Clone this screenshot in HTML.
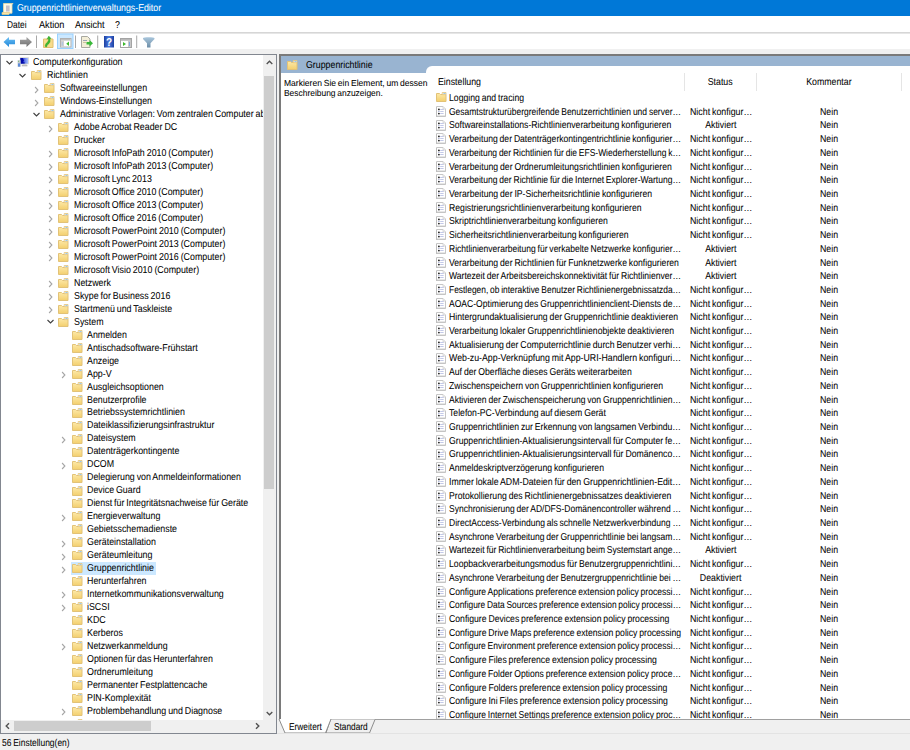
<!DOCTYPE html><html><head><meta charset="utf-8"><style>
html,body{margin:0;padding:0;}
body{width:910px;height:750px;overflow:hidden;position:relative;background:#f0f0f0;font-family:'Liberation Sans',sans-serif;}
.t{position:absolute;white-space:nowrap;line-height:10px;text-rendering:geometricPrecision;-webkit-text-stroke:0.05px currentColor;word-spacing:-0.6px;font-family:'Liberation Sans',sans-serif;}
</style></head><body>
<svg width="0" height="0" style="position:absolute"><defs><linearGradient id="fg" x1="0" y1="0" x2="0" y2="1"><stop offset="0" stop-color="#fde9a8"/><stop offset="1" stop-color="#f3cf6e"/></linearGradient></defs></svg>
<div style="position:absolute;left:0px;top:0px;width:910px;height:16px;background:#0078d7;"></div>
<div class="t" style="left:16.50px;top:4.00px;font-size:10px;color:#fff;transform:scaleX(0.8787);transform-origin:0 0">Gruppenrichtlinienverwaltungs-Editor</div>
<div style="position:absolute;left:1px;top:2px;line-height:0"><svg width="13" height="13" viewBox="0 0 13 13"><path d="M2.5 1.5h9.5l-1 1.2v8.5h-8.5z" fill="#fdf8e4" stroke="#eadca8" stroke-width="0.8"/><rect x="5" y="3.5" width="3.6" height="6" fill="#c4c0c8"/><path d="M1 10.5h7.5l-0.5 2h-7z" fill="#f8e4a8" stroke="#e8cf88" stroke-width="0.7"/></svg></div>
<div style="position:absolute;left:0px;top:16px;width:910px;height:16px;background:#ffffff;"></div>
<div class="t" style="left:7.30px;top:21.00px;font-size:10px;color:#000;transform:scaleX(0.8391);transform-origin:0 0">Datei</div>
<div class="t" style="left:38.50px;top:21.00px;font-size:10px;color:#000;transform:scaleX(0.9138);transform-origin:0 0">Aktion</div>
<div class="t" style="left:74.70px;top:21.00px;font-size:10px;color:#000;transform:scaleX(0.9025);transform-origin:0 0">Ansicht</div>
<div class="t" style="left:115.40px;top:21.00px;font-size:10px;color:#000;transform:scaleX(0.8790);transform-origin:0 0">?</div>
<div style="position:absolute;left:0px;top:32px;width:910px;height:1px;background:#d6d6d6;"></div>
<div style="position:absolute;left:0px;top:33px;width:910px;height:1px;background:#e6e6e6;"></div>
<div style="position:absolute;left:0px;top:34px;width:910px;height:15px;background:#ffffff;"></div>
<svg style="position:absolute;left:0;top:32px" width="160" height="18" viewBox="0 0 160 18">
<defs>
<linearGradient id="gb" x1="0" y1="0" x2="0" y2="1"><stop offset="0" stop-color="#6cc0f5"/><stop offset="1" stop-color="#1f86d8"/></linearGradient>
<linearGradient id="gg" x1="0" y1="0" x2="0" y2="1"><stop offset="0" stop-color="#a8a8a8"/><stop offset="1" stop-color="#6e6e6e"/></linearGradient>
<linearGradient id="gh" x1="0" y1="0" x2="1" y2="0"><stop offset="0" stop-color="#1c3fa0"/><stop offset="0.5" stop-color="#4a7ae0"/><stop offset="1" stop-color="#1c3fa0"/></linearGradient>
<linearGradient id="gf" x1="0" y1="0" x2="0" y2="1"><stop offset="0" stop-color="#a9c6dc"/><stop offset="1" stop-color="#6d8ea8"/></linearGradient>
</defs>
<path d="M3.5 10L9 5v2.8h6v4.4H9V15z" fill="url(#gb)"/>
<path d="M32 10L26.5 5v2.8h-6.5v4.4h6.5V15z" fill="url(#gg)"/>
<rect x="36" y="3.5" width="1" height="12.5" fill="#a8a8a8"/>
<path d="M43.5 7h9.5v8.5h-9.5z" fill="#f8dc8c" stroke="#e0c070" stroke-width="1"/>
<path d="M45 14.5c0-2.5 1.5-3.5 2.5-4.5s1.2-2.2 0.6-3.4l-1.3 0.6 2-3.2 2.3 2.6-1.3 0.3c0.8 1.8 0.3 3.6-1 4.8s-2 1.8-2 3.3z" fill="#3cb832" stroke="#2a9a22" stroke-width="0.3"/>
<rect x="57.5" y="2" width="15.5" height="14.5" fill="#cce8ff" stroke="#99d1ff" stroke-width="1"/>
<rect x="60.5" y="6.5" width="10.5" height="8.5" fill="#fff" stroke="#b0b0b0" stroke-width="1"/>
<rect x="61" y="7" width="9.5" height="1.6" fill="#c0c0c0"/>
<rect x="61" y="8.6" width="3" height="6" fill="#d0d0d0"/><rect x="61.8" y="10" width="1" height="3.5" fill="#a8c4e4"/>
<path d="M69 9.5v4.5l-2.8-2.25z" fill="#3cb82c"/>
<rect x="75" y="3.5" width="1" height="12.5" fill="#a8a8a8"/>
<path d="M81.5 4.5h6l2.5 2.5v8.5h-8.5z" fill="#f3eed8" stroke="#a8a8a0" stroke-width="1"/>
<rect x="83" y="8" width="4" height="0.8" fill="#8890b0"/><rect x="83" y="10" width="3" height="0.8" fill="#c0b890"/>
<path d="M86.5 10h3v-2l3.5 3.3-3.5 3.3v-2h-3z" fill="#38b838"/>
<rect x="97.2" y="3.5" width="1" height="12.5" fill="#a8a8a8"/>
<rect x="104" y="4" width="10" height="11.5" fill="url(#gh)"/>
<text x="109" y="13.8" font-family="Liberation Sans" font-size="10" font-weight="bold" fill="#fff" text-anchor="middle">?</text>
<rect x="120.5" y="6.5" width="11" height="9" fill="#fff" stroke="#a4a4a4" stroke-width="1"/>
<rect x="121" y="7" width="10" height="1.8" fill="#b8b8b8"/>
<rect x="128" y="8.8" width="3" height="6.2" fill="#c8c8c8"/>
<rect x="129" y="10" width="1" height="4" fill="#7fa6d8"/>
<path d="M123 10v4l3-2z" fill="#3cb82c"/>
<rect x="136.2" y="3.5" width="1" height="12.5" fill="#a8a8a8"/>
<path d="M143 6.2c0-1.2 11.5-1.2 11.5 0v0.8l-4 4.2v4.3h-3.5v-4.3l-4-4.2z" fill="url(#gf)"/>
</svg>
<div style="position:absolute;left:0px;top:54px;width:277px;height:680px;background:#ffffff;box-sizing:border-box;border:1px solid #828790;"></div>
<div style="position:absolute;left:279px;top:54px;width:631px;height:666px;background:#ffffff;box-sizing:border-box;border-left:2px solid #7a7a7a;border-top:2px solid #7a7a7a;"></div>
<div style="position:absolute;left:1px;top:55px;width:262px;height:665px;overflow:hidden">
<div style="position:absolute;left:5px;top:5px;line-height:0"><svg width="7" height="5" viewBox="0 0 7 5"><path d="M0.5 1l3 3 3-3" fill="none" stroke="#404040" stroke-width="1.1"/></svg></div>
<div style="position:absolute;left:16px;top:2px;line-height:0"><svg width="13" height="11" viewBox="0 0 13 11"><defs><linearGradient id="scr" x1="0" y1="0" x2="1" y2="0"><stop offset="0" stop-color="#0010c8"/><stop offset="1" stop-color="#a8c4ff"/></linearGradient></defs><rect x="2.8" y="0.3" width="9" height="7" fill="#d4d4cc"/><rect x="3.5" y="1" width="7.6" height="5.6" fill="url(#scr)"/><path d="M3.6 1h2.2l1.2 2.6-1 1.6h1.5l0.2 1.4h-4.1z" fill="#0008a8"/><rect x="5.5" y="7.3" width="4.2" height="0.8" fill="#c8c8c8"/><rect x="4.8" y="8.1" width="5.6" height="1.2" fill="#b4b4b4"/><rect x="0.6" y="3.2" width="3" height="6.6" fill="#c4c8d0"/><rect x="1" y="6.4" width="2.2" height="3.2" fill="#5a8ad8"/><rect x="1" y="3.8" width="1" height="1" fill="#70c070"/></svg></div>
<div class="t" style="left:31.90px;top:3.00px;font-size:10px;color:#000;transform:scaleX(0.8850);transform-origin:0 0">Computerkonfiguration</div>
<div style="position:absolute;left:18px;top:18px;line-height:0"><svg width="7" height="5" viewBox="0 0 7 5"><path d="M0.5 1l3 3 3-3" fill="none" stroke="#404040" stroke-width="1.1"/></svg></div>
<div style="position:absolute;left:30px;top:15px;line-height:0"><svg width="11" height="10" viewBox="0 0 11 10"><path d="M0.5 1.5h3l1 1h5.5v7h-9.5z" fill="url(#fg)" stroke="#e2c277" stroke-width="1"/><path d="M6.2 0.5h3.8v2.2h-3.8z" fill="#fdfaf0" stroke="#e2c277" stroke-width="0.8"/><path d="M7.4 1h2.2v1h-2.2z" fill="#9cc8e8"/></svg></div>
<div class="t" style="left:45.50px;top:16.00px;font-size:10px;color:#000;transform:scaleX(0.8850);transform-origin:0 0">Richtlinien</div>
<div style="position:absolute;left:33px;top:31px;line-height:0"><svg width="5" height="8" viewBox="0 0 5 8"><path d="M1.1 1l2.8 3-2.8 3" fill="none" stroke="#a6a6a6" stroke-width="1.1"/></svg></div>
<div style="position:absolute;left:43px;top:28px;line-height:0"><svg width="11" height="10" viewBox="0 0 11 10"><path d="M0.5 1.5h3l1 1h5.5v7h-9.5z" fill="url(#fg)" stroke="#e2c277" stroke-width="1"/><path d="M6.2 0.5h3.8v2.2h-3.8z" fill="#fdfaf0" stroke="#e2c277" stroke-width="0.8"/><path d="M7.4 1h2.2v1h-2.2z" fill="#9cc8e8"/></svg></div>
<div class="t" style="left:59.10px;top:29.00px;font-size:10px;color:#000;transform:scaleX(0.8850);transform-origin:0 0">Softwareeinstellungen</div>
<div style="position:absolute;left:33px;top:44px;line-height:0"><svg width="5" height="8" viewBox="0 0 5 8"><path d="M1.1 1l2.8 3-2.8 3" fill="none" stroke="#a6a6a6" stroke-width="1.1"/></svg></div>
<div style="position:absolute;left:43px;top:41px;line-height:0"><svg width="11" height="10" viewBox="0 0 11 10"><path d="M0.5 1.5h3l1 1h5.5v7h-9.5z" fill="url(#fg)" stroke="#e2c277" stroke-width="1"/><path d="M6.2 0.5h3.8v2.2h-3.8z" fill="#fdfaf0" stroke="#e2c277" stroke-width="0.8"/><path d="M7.4 1h2.2v1h-2.2z" fill="#9cc8e8"/></svg></div>
<div class="t" style="left:59.10px;top:42.00px;font-size:10px;color:#000;transform:scaleX(0.8850);transform-origin:0 0">Windows-Einstellungen</div>
<div style="position:absolute;left:32px;top:57px;line-height:0"><svg width="7" height="5" viewBox="0 0 7 5"><path d="M0.5 1l3 3 3-3" fill="none" stroke="#404040" stroke-width="1.1"/></svg></div>
<div style="position:absolute;left:43px;top:54px;line-height:0"><svg width="11" height="10" viewBox="0 0 11 10"><path d="M0.5 1.5h3l1 1h5.5v7h-9.5z" fill="url(#fg)" stroke="#e2c277" stroke-width="1"/><path d="M6.2 0.5h3.8v2.2h-3.8z" fill="#fdfaf0" stroke="#e2c277" stroke-width="0.8"/><path d="M7.4 1h2.2v1h-2.2z" fill="#9cc8e8"/></svg></div>
<div class="t" style="left:59.10px;top:55.00px;font-size:10px;color:#000;transform:scaleX(0.8850);transform-origin:0 0">Administrative Vorlagen: Vom zentralen Computer abgerufene Richtliniendefinitionen</div>
<div style="position:absolute;left:47px;top:70px;line-height:0"><svg width="5" height="8" viewBox="0 0 5 8"><path d="M1.1 1l2.8 3-2.8 3" fill="none" stroke="#a6a6a6" stroke-width="1.1"/></svg></div>
<div style="position:absolute;left:57px;top:67px;line-height:0"><svg width="11" height="10" viewBox="0 0 11 10"><path d="M0.5 1.5h3l1 1h5.5v7h-9.5z" fill="url(#fg)" stroke="#e2c277" stroke-width="1"/><path d="M6.2 0.5h3.8v2.2h-3.8z" fill="#fdfaf0" stroke="#e2c277" stroke-width="0.8"/><path d="M7.4 1h2.2v1h-2.2z" fill="#9cc8e8"/></svg></div>
<div class="t" style="left:72.70px;top:68.00px;font-size:10px;color:#000;transform:scaleX(0.8850);transform-origin:0 0">Adobe Acrobat Reader DC</div>
<div style="position:absolute;left:57px;top:80px;line-height:0"><svg width="11" height="10" viewBox="0 0 11 10"><path d="M0.5 1.5h3l1 1h5.5v7h-9.5z" fill="url(#fg)" stroke="#e2c277" stroke-width="1"/><path d="M6.2 0.5h3.8v2.2h-3.8z" fill="#fdfaf0" stroke="#e2c277" stroke-width="0.8"/><path d="M7.4 1h2.2v1h-2.2z" fill="#9cc8e8"/></svg></div>
<div class="t" style="left:72.70px;top:81.00px;font-size:10px;color:#000;transform:scaleX(0.8850);transform-origin:0 0">Drucker</div>
<div style="position:absolute;left:47px;top:95px;line-height:0"><svg width="5" height="8" viewBox="0 0 5 8"><path d="M1.1 1l2.8 3-2.8 3" fill="none" stroke="#a6a6a6" stroke-width="1.1"/></svg></div>
<div style="position:absolute;left:57px;top:93px;line-height:0"><svg width="11" height="10" viewBox="0 0 11 10"><path d="M0.5 1.5h3l1 1h5.5v7h-9.5z" fill="url(#fg)" stroke="#e2c277" stroke-width="1"/><path d="M6.2 0.5h3.8v2.2h-3.8z" fill="#fdfaf0" stroke="#e2c277" stroke-width="0.8"/><path d="M7.4 1h2.2v1h-2.2z" fill="#9cc8e8"/></svg></div>
<div class="t" style="left:72.70px;top:94.00px;font-size:10px;color:#000;transform:scaleX(0.8850);transform-origin:0 0">Microsoft InfoPath 2010 (Computer)</div>
<div style="position:absolute;left:47px;top:108px;line-height:0"><svg width="5" height="8" viewBox="0 0 5 8"><path d="M1.1 1l2.8 3-2.8 3" fill="none" stroke="#a6a6a6" stroke-width="1.1"/></svg></div>
<div style="position:absolute;left:57px;top:106px;line-height:0"><svg width="11" height="10" viewBox="0 0 11 10"><path d="M0.5 1.5h3l1 1h5.5v7h-9.5z" fill="url(#fg)" stroke="#e2c277" stroke-width="1"/><path d="M6.2 0.5h3.8v2.2h-3.8z" fill="#fdfaf0" stroke="#e2c277" stroke-width="0.8"/><path d="M7.4 1h2.2v1h-2.2z" fill="#9cc8e8"/></svg></div>
<div class="t" style="left:72.70px;top:107.00px;font-size:10px;color:#000;transform:scaleX(0.8850);transform-origin:0 0">Microsoft InfoPath 2013 (Computer)</div>
<div style="position:absolute;left:47px;top:121px;line-height:0"><svg width="5" height="8" viewBox="0 0 5 8"><path d="M1.1 1l2.8 3-2.8 3" fill="none" stroke="#a6a6a6" stroke-width="1.1"/></svg></div>
<div style="position:absolute;left:57px;top:119px;line-height:0"><svg width="11" height="10" viewBox="0 0 11 10"><path d="M0.5 1.5h3l1 1h5.5v7h-9.5z" fill="url(#fg)" stroke="#e2c277" stroke-width="1"/><path d="M6.2 0.5h3.8v2.2h-3.8z" fill="#fdfaf0" stroke="#e2c277" stroke-width="0.8"/><path d="M7.4 1h2.2v1h-2.2z" fill="#9cc8e8"/></svg></div>
<div class="t" style="left:72.70px;top:120.00px;font-size:10px;color:#000;transform:scaleX(0.8850);transform-origin:0 0">Microsoft Lync 2013</div>
<div style="position:absolute;left:47px;top:134px;line-height:0"><svg width="5" height="8" viewBox="0 0 5 8"><path d="M1.1 1l2.8 3-2.8 3" fill="none" stroke="#a6a6a6" stroke-width="1.1"/></svg></div>
<div style="position:absolute;left:57px;top:132px;line-height:0"><svg width="11" height="10" viewBox="0 0 11 10"><path d="M0.5 1.5h3l1 1h5.5v7h-9.5z" fill="url(#fg)" stroke="#e2c277" stroke-width="1"/><path d="M6.2 0.5h3.8v2.2h-3.8z" fill="#fdfaf0" stroke="#e2c277" stroke-width="0.8"/><path d="M7.4 1h2.2v1h-2.2z" fill="#9cc8e8"/></svg></div>
<div class="t" style="left:72.70px;top:133.00px;font-size:10px;color:#000;transform:scaleX(0.8850);transform-origin:0 0">Microsoft Office 2010 (Computer)</div>
<div style="position:absolute;left:47px;top:147px;line-height:0"><svg width="5" height="8" viewBox="0 0 5 8"><path d="M1.1 1l2.8 3-2.8 3" fill="none" stroke="#a6a6a6" stroke-width="1.1"/></svg></div>
<div style="position:absolute;left:57px;top:145px;line-height:0"><svg width="11" height="10" viewBox="0 0 11 10"><path d="M0.5 1.5h3l1 1h5.5v7h-9.5z" fill="url(#fg)" stroke="#e2c277" stroke-width="1"/><path d="M6.2 0.5h3.8v2.2h-3.8z" fill="#fdfaf0" stroke="#e2c277" stroke-width="0.8"/><path d="M7.4 1h2.2v1h-2.2z" fill="#9cc8e8"/></svg></div>
<div class="t" style="left:72.70px;top:146.00px;font-size:10px;color:#000;transform:scaleX(0.8850);transform-origin:0 0">Microsoft Office 2013 (Computer)</div>
<div style="position:absolute;left:47px;top:160px;line-height:0"><svg width="5" height="8" viewBox="0 0 5 8"><path d="M1.1 1l2.8 3-2.8 3" fill="none" stroke="#a6a6a6" stroke-width="1.1"/></svg></div>
<div style="position:absolute;left:57px;top:158px;line-height:0"><svg width="11" height="10" viewBox="0 0 11 10"><path d="M0.5 1.5h3l1 1h5.5v7h-9.5z" fill="url(#fg)" stroke="#e2c277" stroke-width="1"/><path d="M6.2 0.5h3.8v2.2h-3.8z" fill="#fdfaf0" stroke="#e2c277" stroke-width="0.8"/><path d="M7.4 1h2.2v1h-2.2z" fill="#9cc8e8"/></svg></div>
<div class="t" style="left:72.70px;top:159.00px;font-size:10px;color:#000;transform:scaleX(0.8850);transform-origin:0 0">Microsoft Office 2016 (Computer)</div>
<div style="position:absolute;left:47px;top:173px;line-height:0"><svg width="5" height="8" viewBox="0 0 5 8"><path d="M1.1 1l2.8 3-2.8 3" fill="none" stroke="#a6a6a6" stroke-width="1.1"/></svg></div>
<div style="position:absolute;left:57px;top:171px;line-height:0"><svg width="11" height="10" viewBox="0 0 11 10"><path d="M0.5 1.5h3l1 1h5.5v7h-9.5z" fill="url(#fg)" stroke="#e2c277" stroke-width="1"/><path d="M6.2 0.5h3.8v2.2h-3.8z" fill="#fdfaf0" stroke="#e2c277" stroke-width="0.8"/><path d="M7.4 1h2.2v1h-2.2z" fill="#9cc8e8"/></svg></div>
<div class="t" style="left:72.70px;top:172.00px;font-size:10px;color:#000;transform:scaleX(0.8850);transform-origin:0 0">Microsoft PowerPoint 2010 (Computer)</div>
<div style="position:absolute;left:47px;top:186px;line-height:0"><svg width="5" height="8" viewBox="0 0 5 8"><path d="M1.1 1l2.8 3-2.8 3" fill="none" stroke="#a6a6a6" stroke-width="1.1"/></svg></div>
<div style="position:absolute;left:57px;top:184px;line-height:0"><svg width="11" height="10" viewBox="0 0 11 10"><path d="M0.5 1.5h3l1 1h5.5v7h-9.5z" fill="url(#fg)" stroke="#e2c277" stroke-width="1"/><path d="M6.2 0.5h3.8v2.2h-3.8z" fill="#fdfaf0" stroke="#e2c277" stroke-width="0.8"/><path d="M7.4 1h2.2v1h-2.2z" fill="#9cc8e8"/></svg></div>
<div class="t" style="left:72.70px;top:185.00px;font-size:10px;color:#000;transform:scaleX(0.8850);transform-origin:0 0">Microsoft PowerPoint 2013 (Computer)</div>
<div style="position:absolute;left:47px;top:199px;line-height:0"><svg width="5" height="8" viewBox="0 0 5 8"><path d="M1.1 1l2.8 3-2.8 3" fill="none" stroke="#a6a6a6" stroke-width="1.1"/></svg></div>
<div style="position:absolute;left:57px;top:197px;line-height:0"><svg width="11" height="10" viewBox="0 0 11 10"><path d="M0.5 1.5h3l1 1h5.5v7h-9.5z" fill="url(#fg)" stroke="#e2c277" stroke-width="1"/><path d="M6.2 0.5h3.8v2.2h-3.8z" fill="#fdfaf0" stroke="#e2c277" stroke-width="0.8"/><path d="M7.4 1h2.2v1h-2.2z" fill="#9cc8e8"/></svg></div>
<div class="t" style="left:72.70px;top:198.00px;font-size:10px;color:#000;transform:scaleX(0.8850);transform-origin:0 0">Microsoft PowerPoint 2016 (Computer)</div>
<div style="position:absolute;left:57px;top:210px;line-height:0"><svg width="11" height="10" viewBox="0 0 11 10"><path d="M0.5 1.5h3l1 1h5.5v7h-9.5z" fill="url(#fg)" stroke="#e2c277" stroke-width="1"/><path d="M6.2 0.5h3.8v2.2h-3.8z" fill="#fdfaf0" stroke="#e2c277" stroke-width="0.8"/><path d="M7.4 1h2.2v1h-2.2z" fill="#9cc8e8"/></svg></div>
<div class="t" style="left:72.70px;top:211.00px;font-size:10px;color:#000;transform:scaleX(0.8850);transform-origin:0 0">Microsoft Visio 2010 (Computer)</div>
<div style="position:absolute;left:47px;top:225px;line-height:0"><svg width="5" height="8" viewBox="0 0 5 8"><path d="M1.1 1l2.8 3-2.8 3" fill="none" stroke="#a6a6a6" stroke-width="1.1"/></svg></div>
<div style="position:absolute;left:57px;top:223px;line-height:0"><svg width="11" height="10" viewBox="0 0 11 10"><path d="M0.5 1.5h3l1 1h5.5v7h-9.5z" fill="url(#fg)" stroke="#e2c277" stroke-width="1"/><path d="M6.2 0.5h3.8v2.2h-3.8z" fill="#fdfaf0" stroke="#e2c277" stroke-width="0.8"/><path d="M7.4 1h2.2v1h-2.2z" fill="#9cc8e8"/></svg></div>
<div class="t" style="left:72.70px;top:224.00px;font-size:10px;color:#000;transform:scaleX(0.8850);transform-origin:0 0">Netzwerk</div>
<div style="position:absolute;left:47px;top:238px;line-height:0"><svg width="5" height="8" viewBox="0 0 5 8"><path d="M1.1 1l2.8 3-2.8 3" fill="none" stroke="#a6a6a6" stroke-width="1.1"/></svg></div>
<div style="position:absolute;left:57px;top:236px;line-height:0"><svg width="11" height="10" viewBox="0 0 11 10"><path d="M0.5 1.5h3l1 1h5.5v7h-9.5z" fill="url(#fg)" stroke="#e2c277" stroke-width="1"/><path d="M6.2 0.5h3.8v2.2h-3.8z" fill="#fdfaf0" stroke="#e2c277" stroke-width="0.8"/><path d="M7.4 1h2.2v1h-2.2z" fill="#9cc8e8"/></svg></div>
<div class="t" style="left:72.70px;top:237.00px;font-size:10px;color:#000;transform:scaleX(0.8850);transform-origin:0 0">Skype for Business 2016</div>
<div style="position:absolute;left:47px;top:251px;line-height:0"><svg width="5" height="8" viewBox="0 0 5 8"><path d="M1.1 1l2.8 3-2.8 3" fill="none" stroke="#a6a6a6" stroke-width="1.1"/></svg></div>
<div style="position:absolute;left:57px;top:249px;line-height:0"><svg width="11" height="10" viewBox="0 0 11 10"><path d="M0.5 1.5h3l1 1h5.5v7h-9.5z" fill="url(#fg)" stroke="#e2c277" stroke-width="1"/><path d="M6.2 0.5h3.8v2.2h-3.8z" fill="#fdfaf0" stroke="#e2c277" stroke-width="0.8"/><path d="M7.4 1h2.2v1h-2.2z" fill="#9cc8e8"/></svg></div>
<div class="t" style="left:72.70px;top:250.00px;font-size:10px;color:#000;transform:scaleX(0.8850);transform-origin:0 0">Startmenü und Taskleiste</div>
<div style="position:absolute;left:46px;top:264px;line-height:0"><svg width="7" height="5" viewBox="0 0 7 5"><path d="M0.5 1l3 3 3-3" fill="none" stroke="#404040" stroke-width="1.1"/></svg></div>
<div style="position:absolute;left:57px;top:262px;line-height:0"><svg width="11" height="10" viewBox="0 0 11 10"><path d="M0.5 1.5h3l1 1h5.5v7h-9.5z" fill="url(#fg)" stroke="#e2c277" stroke-width="1"/><path d="M6.2 0.5h3.8v2.2h-3.8z" fill="#fdfaf0" stroke="#e2c277" stroke-width="0.8"/><path d="M7.4 1h2.2v1h-2.2z" fill="#9cc8e8"/></svg></div>
<div class="t" style="left:72.70px;top:263.00px;font-size:10px;color:#000;transform:scaleX(0.8850);transform-origin:0 0">System</div>
<div style="position:absolute;left:71px;top:275px;line-height:0"><svg width="11" height="10" viewBox="0 0 11 10"><path d="M0.5 1.5h3l1 1h5.5v7h-9.5z" fill="url(#fg)" stroke="#e2c277" stroke-width="1"/><path d="M6.2 0.5h3.8v2.2h-3.8z" fill="#fdfaf0" stroke="#e2c277" stroke-width="0.8"/><path d="M7.4 1h2.2v1h-2.2z" fill="#9cc8e8"/></svg></div>
<div class="t" style="left:86.30px;top:276.00px;font-size:10px;color:#000;transform:scaleX(0.8850);transform-origin:0 0">Anmelden</div>
<div style="position:absolute;left:71px;top:288px;line-height:0"><svg width="11" height="10" viewBox="0 0 11 10"><path d="M0.5 1.5h3l1 1h5.5v7h-9.5z" fill="url(#fg)" stroke="#e2c277" stroke-width="1"/><path d="M6.2 0.5h3.8v2.2h-3.8z" fill="#fdfaf0" stroke="#e2c277" stroke-width="0.8"/><path d="M7.4 1h2.2v1h-2.2z" fill="#9cc8e8"/></svg></div>
<div class="t" style="left:86.30px;top:289.00px;font-size:10px;color:#000;transform:scaleX(0.8850);transform-origin:0 0">Antischadsoftware-Frühstart</div>
<div style="position:absolute;left:71px;top:301px;line-height:0"><svg width="11" height="10" viewBox="0 0 11 10"><path d="M0.5 1.5h3l1 1h5.5v7h-9.5z" fill="url(#fg)" stroke="#e2c277" stroke-width="1"/><path d="M6.2 0.5h3.8v2.2h-3.8z" fill="#fdfaf0" stroke="#e2c277" stroke-width="0.8"/><path d="M7.4 1h2.2v1h-2.2z" fill="#9cc8e8"/></svg></div>
<div class="t" style="left:86.30px;top:302.00px;font-size:10px;color:#000;transform:scaleX(0.8850);transform-origin:0 0">Anzeige</div>
<div style="position:absolute;left:60px;top:316px;line-height:0"><svg width="5" height="8" viewBox="0 0 5 8"><path d="M1.1 1l2.8 3-2.8 3" fill="none" stroke="#a6a6a6" stroke-width="1.1"/></svg></div>
<div style="position:absolute;left:71px;top:314px;line-height:0"><svg width="11" height="10" viewBox="0 0 11 10"><path d="M0.5 1.5h3l1 1h5.5v7h-9.5z" fill="url(#fg)" stroke="#e2c277" stroke-width="1"/><path d="M6.2 0.5h3.8v2.2h-3.8z" fill="#fdfaf0" stroke="#e2c277" stroke-width="0.8"/><path d="M7.4 1h2.2v1h-2.2z" fill="#9cc8e8"/></svg></div>
<div class="t" style="left:86.30px;top:315.00px;font-size:10px;color:#000;transform:scaleX(0.8850);transform-origin:0 0">App-V</div>
<div style="position:absolute;left:71px;top:327px;line-height:0"><svg width="11" height="10" viewBox="0 0 11 10"><path d="M0.5 1.5h3l1 1h5.5v7h-9.5z" fill="url(#fg)" stroke="#e2c277" stroke-width="1"/><path d="M6.2 0.5h3.8v2.2h-3.8z" fill="#fdfaf0" stroke="#e2c277" stroke-width="0.8"/><path d="M7.4 1h2.2v1h-2.2z" fill="#9cc8e8"/></svg></div>
<div class="t" style="left:86.30px;top:328.00px;font-size:10px;color:#000;transform:scaleX(0.8850);transform-origin:0 0">Ausgleichsoptionen</div>
<div style="position:absolute;left:71px;top:340px;line-height:0"><svg width="11" height="10" viewBox="0 0 11 10"><path d="M0.5 1.5h3l1 1h5.5v7h-9.5z" fill="url(#fg)" stroke="#e2c277" stroke-width="1"/><path d="M6.2 0.5h3.8v2.2h-3.8z" fill="#fdfaf0" stroke="#e2c277" stroke-width="0.8"/><path d="M7.4 1h2.2v1h-2.2z" fill="#9cc8e8"/></svg></div>
<div class="t" style="left:86.30px;top:341.00px;font-size:10px;color:#000;transform:scaleX(0.8850);transform-origin:0 0">Benutzerprofile</div>
<div style="position:absolute;left:71px;top:353px;line-height:0"><svg width="11" height="10" viewBox="0 0 11 10"><path d="M0.5 1.5h3l1 1h5.5v7h-9.5z" fill="url(#fg)" stroke="#e2c277" stroke-width="1"/><path d="M6.2 0.5h3.8v2.2h-3.8z" fill="#fdfaf0" stroke="#e2c277" stroke-width="0.8"/><path d="M7.4 1h2.2v1h-2.2z" fill="#9cc8e8"/></svg></div>
<div class="t" style="left:86.30px;top:353.00px;font-size:10px;color:#000;transform:scaleX(0.8850);transform-origin:0 0">Betriebssystemrichtlinien</div>
<div style="position:absolute;left:71px;top:366px;line-height:0"><svg width="11" height="10" viewBox="0 0 11 10"><path d="M0.5 1.5h3l1 1h5.5v7h-9.5z" fill="url(#fg)" stroke="#e2c277" stroke-width="1"/><path d="M6.2 0.5h3.8v2.2h-3.8z" fill="#fdfaf0" stroke="#e2c277" stroke-width="0.8"/><path d="M7.4 1h2.2v1h-2.2z" fill="#9cc8e8"/></svg></div>
<div class="t" style="left:86.30px;top:366.00px;font-size:10px;color:#000;transform:scaleX(0.8850);transform-origin:0 0">Dateiklassifizierungsinfrastruktur</div>
<div style="position:absolute;left:60px;top:381px;line-height:0"><svg width="5" height="8" viewBox="0 0 5 8"><path d="M1.1 1l2.8 3-2.8 3" fill="none" stroke="#a6a6a6" stroke-width="1.1"/></svg></div>
<div style="position:absolute;left:71px;top:379px;line-height:0"><svg width="11" height="10" viewBox="0 0 11 10"><path d="M0.5 1.5h3l1 1h5.5v7h-9.5z" fill="url(#fg)" stroke="#e2c277" stroke-width="1"/><path d="M6.2 0.5h3.8v2.2h-3.8z" fill="#fdfaf0" stroke="#e2c277" stroke-width="0.8"/><path d="M7.4 1h2.2v1h-2.2z" fill="#9cc8e8"/></svg></div>
<div class="t" style="left:86.30px;top:379.00px;font-size:10px;color:#000;transform:scaleX(0.8850);transform-origin:0 0">Dateisystem</div>
<div style="position:absolute;left:71px;top:392px;line-height:0"><svg width="11" height="10" viewBox="0 0 11 10"><path d="M0.5 1.5h3l1 1h5.5v7h-9.5z" fill="url(#fg)" stroke="#e2c277" stroke-width="1"/><path d="M6.2 0.5h3.8v2.2h-3.8z" fill="#fdfaf0" stroke="#e2c277" stroke-width="0.8"/><path d="M7.4 1h2.2v1h-2.2z" fill="#9cc8e8"/></svg></div>
<div class="t" style="left:86.30px;top:392.00px;font-size:10px;color:#000;transform:scaleX(0.8850);transform-origin:0 0">Datenträgerkontingente</div>
<div style="position:absolute;left:60px;top:407px;line-height:0"><svg width="5" height="8" viewBox="0 0 5 8"><path d="M1.1 1l2.8 3-2.8 3" fill="none" stroke="#a6a6a6" stroke-width="1.1"/></svg></div>
<div style="position:absolute;left:71px;top:405px;line-height:0"><svg width="11" height="10" viewBox="0 0 11 10"><path d="M0.5 1.5h3l1 1h5.5v7h-9.5z" fill="url(#fg)" stroke="#e2c277" stroke-width="1"/><path d="M6.2 0.5h3.8v2.2h-3.8z" fill="#fdfaf0" stroke="#e2c277" stroke-width="0.8"/><path d="M7.4 1h2.2v1h-2.2z" fill="#9cc8e8"/></svg></div>
<div class="t" style="left:86.30px;top:405.00px;font-size:10px;color:#000;transform:scaleX(0.8850);transform-origin:0 0">DCOM</div>
<div style="position:absolute;left:71px;top:418px;line-height:0"><svg width="11" height="10" viewBox="0 0 11 10"><path d="M0.5 1.5h3l1 1h5.5v7h-9.5z" fill="url(#fg)" stroke="#e2c277" stroke-width="1"/><path d="M6.2 0.5h3.8v2.2h-3.8z" fill="#fdfaf0" stroke="#e2c277" stroke-width="0.8"/><path d="M7.4 1h2.2v1h-2.2z" fill="#9cc8e8"/></svg></div>
<div class="t" style="left:86.30px;top:418.00px;font-size:10px;color:#000;transform:scaleX(0.8850);transform-origin:0 0">Delegierung von Anmeldeinformationen</div>
<div style="position:absolute;left:71px;top:431px;line-height:0"><svg width="11" height="10" viewBox="0 0 11 10"><path d="M0.5 1.5h3l1 1h5.5v7h-9.5z" fill="url(#fg)" stroke="#e2c277" stroke-width="1"/><path d="M6.2 0.5h3.8v2.2h-3.8z" fill="#fdfaf0" stroke="#e2c277" stroke-width="0.8"/><path d="M7.4 1h2.2v1h-2.2z" fill="#9cc8e8"/></svg></div>
<div class="t" style="left:86.30px;top:431.00px;font-size:10px;color:#000;transform:scaleX(0.8850);transform-origin:0 0">Device Guard</div>
<div style="position:absolute;left:71px;top:443px;line-height:0"><svg width="11" height="10" viewBox="0 0 11 10"><path d="M0.5 1.5h3l1 1h5.5v7h-9.5z" fill="url(#fg)" stroke="#e2c277" stroke-width="1"/><path d="M6.2 0.5h3.8v2.2h-3.8z" fill="#fdfaf0" stroke="#e2c277" stroke-width="0.8"/><path d="M7.4 1h2.2v1h-2.2z" fill="#9cc8e8"/></svg></div>
<div class="t" style="left:86.30px;top:444.00px;font-size:10px;color:#000;transform:scaleX(0.8850);transform-origin:0 0">Dienst für Integritätsnachweise für Geräte</div>
<div style="position:absolute;left:60px;top:459px;line-height:0"><svg width="5" height="8" viewBox="0 0 5 8"><path d="M1.1 1l2.8 3-2.8 3" fill="none" stroke="#a6a6a6" stroke-width="1.1"/></svg></div>
<div style="position:absolute;left:71px;top:456px;line-height:0"><svg width="11" height="10" viewBox="0 0 11 10"><path d="M0.5 1.5h3l1 1h5.5v7h-9.5z" fill="url(#fg)" stroke="#e2c277" stroke-width="1"/><path d="M6.2 0.5h3.8v2.2h-3.8z" fill="#fdfaf0" stroke="#e2c277" stroke-width="0.8"/><path d="M7.4 1h2.2v1h-2.2z" fill="#9cc8e8"/></svg></div>
<div class="t" style="left:86.30px;top:457.00px;font-size:10px;color:#000;transform:scaleX(0.8850);transform-origin:0 0">Energieverwaltung</div>
<div style="position:absolute;left:71px;top:469px;line-height:0"><svg width="11" height="10" viewBox="0 0 11 10"><path d="M0.5 1.5h3l1 1h5.5v7h-9.5z" fill="url(#fg)" stroke="#e2c277" stroke-width="1"/><path d="M6.2 0.5h3.8v2.2h-3.8z" fill="#fdfaf0" stroke="#e2c277" stroke-width="0.8"/><path d="M7.4 1h2.2v1h-2.2z" fill="#9cc8e8"/></svg></div>
<div class="t" style="left:86.30px;top:470.00px;font-size:10px;color:#000;transform:scaleX(0.8850);transform-origin:0 0">Gebietsschemadienste</div>
<div style="position:absolute;left:60px;top:485px;line-height:0"><svg width="5" height="8" viewBox="0 0 5 8"><path d="M1.1 1l2.8 3-2.8 3" fill="none" stroke="#a6a6a6" stroke-width="1.1"/></svg></div>
<div style="position:absolute;left:71px;top:482px;line-height:0"><svg width="11" height="10" viewBox="0 0 11 10"><path d="M0.5 1.5h3l1 1h5.5v7h-9.5z" fill="url(#fg)" stroke="#e2c277" stroke-width="1"/><path d="M6.2 0.5h3.8v2.2h-3.8z" fill="#fdfaf0" stroke="#e2c277" stroke-width="0.8"/><path d="M7.4 1h2.2v1h-2.2z" fill="#9cc8e8"/></svg></div>
<div class="t" style="left:86.30px;top:483.00px;font-size:10px;color:#000;transform:scaleX(0.8850);transform-origin:0 0">Geräteinstallation</div>
<div style="position:absolute;left:60px;top:498px;line-height:0"><svg width="5" height="8" viewBox="0 0 5 8"><path d="M1.1 1l2.8 3-2.8 3" fill="none" stroke="#a6a6a6" stroke-width="1.1"/></svg></div>
<div style="position:absolute;left:71px;top:495px;line-height:0"><svg width="11" height="10" viewBox="0 0 11 10"><path d="M0.5 1.5h3l1 1h5.5v7h-9.5z" fill="url(#fg)" stroke="#e2c277" stroke-width="1"/><path d="M6.2 0.5h3.8v2.2h-3.8z" fill="#fdfaf0" stroke="#e2c277" stroke-width="0.8"/><path d="M7.4 1h2.2v1h-2.2z" fill="#9cc8e8"/></svg></div>
<div class="t" style="left:86.30px;top:496.00px;font-size:10px;color:#000;transform:scaleX(0.8850);transform-origin:0 0">Geräteumleitung</div>
<div style="position:absolute;left:69.8px;top:506.5px;width:85.2px;height:13px;background:#cce8ff"></div>
<div style="position:absolute;left:60px;top:511px;line-height:0"><svg width="5" height="8" viewBox="0 0 5 8"><path d="M1.1 1l2.8 3-2.8 3" fill="none" stroke="#a6a6a6" stroke-width="1.1"/></svg></div>
<div style="position:absolute;left:71px;top:508px;line-height:0"><svg width="11" height="10" viewBox="0 0 11 10"><path d="M0.5 1.5h3l1 1h5.5v7h-9.5z" fill="url(#fg)" stroke="#e2c277" stroke-width="1"/><path d="M6.2 0.5h3.8v2.2h-3.8z" fill="#fdfaf0" stroke="#e2c277" stroke-width="0.8"/><path d="M7.4 1h2.2v1h-2.2z" fill="#9cc8e8"/></svg></div>
<div class="t" style="left:86.30px;top:509.00px;font-size:10px;color:#000;transform:scaleX(0.8850);transform-origin:0 0">Gruppenrichtlinie</div>
<div style="position:absolute;left:71px;top:521px;line-height:0"><svg width="11" height="10" viewBox="0 0 11 10"><path d="M0.5 1.5h3l1 1h5.5v7h-9.5z" fill="url(#fg)" stroke="#e2c277" stroke-width="1"/><path d="M6.2 0.5h3.8v2.2h-3.8z" fill="#fdfaf0" stroke="#e2c277" stroke-width="0.8"/><path d="M7.4 1h2.2v1h-2.2z" fill="#9cc8e8"/></svg></div>
<div class="t" style="left:86.30px;top:522.00px;font-size:10px;color:#000;transform:scaleX(0.8850);transform-origin:0 0">Herunterfahren</div>
<div style="position:absolute;left:60px;top:536px;line-height:0"><svg width="5" height="8" viewBox="0 0 5 8"><path d="M1.1 1l2.8 3-2.8 3" fill="none" stroke="#a6a6a6" stroke-width="1.1"/></svg></div>
<div style="position:absolute;left:71px;top:534px;line-height:0"><svg width="11" height="10" viewBox="0 0 11 10"><path d="M0.5 1.5h3l1 1h5.5v7h-9.5z" fill="url(#fg)" stroke="#e2c277" stroke-width="1"/><path d="M6.2 0.5h3.8v2.2h-3.8z" fill="#fdfaf0" stroke="#e2c277" stroke-width="0.8"/><path d="M7.4 1h2.2v1h-2.2z" fill="#9cc8e8"/></svg></div>
<div class="t" style="left:86.30px;top:535.00px;font-size:10px;color:#000;transform:scaleX(0.8850);transform-origin:0 0">Internetkommunikationsverwaltung</div>
<div style="position:absolute;left:60px;top:549px;line-height:0"><svg width="5" height="8" viewBox="0 0 5 8"><path d="M1.1 1l2.8 3-2.8 3" fill="none" stroke="#a6a6a6" stroke-width="1.1"/></svg></div>
<div style="position:absolute;left:71px;top:547px;line-height:0"><svg width="11" height="10" viewBox="0 0 11 10"><path d="M0.5 1.5h3l1 1h5.5v7h-9.5z" fill="url(#fg)" stroke="#e2c277" stroke-width="1"/><path d="M6.2 0.5h3.8v2.2h-3.8z" fill="#fdfaf0" stroke="#e2c277" stroke-width="0.8"/><path d="M7.4 1h2.2v1h-2.2z" fill="#9cc8e8"/></svg></div>
<div class="t" style="left:86.30px;top:548.00px;font-size:10px;color:#000;transform:scaleX(0.8850);transform-origin:0 0">iSCSI</div>
<div style="position:absolute;left:71px;top:560px;line-height:0"><svg width="11" height="10" viewBox="0 0 11 10"><path d="M0.5 1.5h3l1 1h5.5v7h-9.5z" fill="url(#fg)" stroke="#e2c277" stroke-width="1"/><path d="M6.2 0.5h3.8v2.2h-3.8z" fill="#fdfaf0" stroke="#e2c277" stroke-width="0.8"/><path d="M7.4 1h2.2v1h-2.2z" fill="#9cc8e8"/></svg></div>
<div class="t" style="left:86.30px;top:561.00px;font-size:10px;color:#000;transform:scaleX(0.8850);transform-origin:0 0">KDC</div>
<div style="position:absolute;left:71px;top:573px;line-height:0"><svg width="11" height="10" viewBox="0 0 11 10"><path d="M0.5 1.5h3l1 1h5.5v7h-9.5z" fill="url(#fg)" stroke="#e2c277" stroke-width="1"/><path d="M6.2 0.5h3.8v2.2h-3.8z" fill="#fdfaf0" stroke="#e2c277" stroke-width="0.8"/><path d="M7.4 1h2.2v1h-2.2z" fill="#9cc8e8"/></svg></div>
<div class="t" style="left:86.30px;top:574.00px;font-size:10px;color:#000;transform:scaleX(0.8850);transform-origin:0 0">Kerberos</div>
<div style="position:absolute;left:60px;top:588px;line-height:0"><svg width="5" height="8" viewBox="0 0 5 8"><path d="M1.1 1l2.8 3-2.8 3" fill="none" stroke="#a6a6a6" stroke-width="1.1"/></svg></div>
<div style="position:absolute;left:71px;top:586px;line-height:0"><svg width="11" height="10" viewBox="0 0 11 10"><path d="M0.5 1.5h3l1 1h5.5v7h-9.5z" fill="url(#fg)" stroke="#e2c277" stroke-width="1"/><path d="M6.2 0.5h3.8v2.2h-3.8z" fill="#fdfaf0" stroke="#e2c277" stroke-width="0.8"/><path d="M7.4 1h2.2v1h-2.2z" fill="#9cc8e8"/></svg></div>
<div class="t" style="left:86.30px;top:587.00px;font-size:10px;color:#000;transform:scaleX(0.8850);transform-origin:0 0">Netzwerkanmeldung</div>
<div style="position:absolute;left:71px;top:599px;line-height:0"><svg width="11" height="10" viewBox="0 0 11 10"><path d="M0.5 1.5h3l1 1h5.5v7h-9.5z" fill="url(#fg)" stroke="#e2c277" stroke-width="1"/><path d="M6.2 0.5h3.8v2.2h-3.8z" fill="#fdfaf0" stroke="#e2c277" stroke-width="0.8"/><path d="M7.4 1h2.2v1h-2.2z" fill="#9cc8e8"/></svg></div>
<div class="t" style="left:86.30px;top:600.00px;font-size:10px;color:#000;transform:scaleX(0.8850);transform-origin:0 0">Optionen für das Herunterfahren</div>
<div style="position:absolute;left:71px;top:612px;line-height:0"><svg width="11" height="10" viewBox="0 0 11 10"><path d="M0.5 1.5h3l1 1h5.5v7h-9.5z" fill="url(#fg)" stroke="#e2c277" stroke-width="1"/><path d="M6.2 0.5h3.8v2.2h-3.8z" fill="#fdfaf0" stroke="#e2c277" stroke-width="0.8"/><path d="M7.4 1h2.2v1h-2.2z" fill="#9cc8e8"/></svg></div>
<div class="t" style="left:86.30px;top:613.00px;font-size:10px;color:#000;transform:scaleX(0.8850);transform-origin:0 0">Ordnerumleitung</div>
<div style="position:absolute;left:71px;top:625px;line-height:0"><svg width="11" height="10" viewBox="0 0 11 10"><path d="M0.5 1.5h3l1 1h5.5v7h-9.5z" fill="url(#fg)" stroke="#e2c277" stroke-width="1"/><path d="M6.2 0.5h3.8v2.2h-3.8z" fill="#fdfaf0" stroke="#e2c277" stroke-width="0.8"/><path d="M7.4 1h2.2v1h-2.2z" fill="#9cc8e8"/></svg></div>
<div class="t" style="left:86.30px;top:626.00px;font-size:10px;color:#000;transform:scaleX(0.8850);transform-origin:0 0">Permanenter Festplattencache</div>
<div style="position:absolute;left:71px;top:638px;line-height:0"><svg width="11" height="10" viewBox="0 0 11 10"><path d="M0.5 1.5h3l1 1h5.5v7h-9.5z" fill="url(#fg)" stroke="#e2c277" stroke-width="1"/><path d="M6.2 0.5h3.8v2.2h-3.8z" fill="#fdfaf0" stroke="#e2c277" stroke-width="0.8"/><path d="M7.4 1h2.2v1h-2.2z" fill="#9cc8e8"/></svg></div>
<div class="t" style="left:86.30px;top:639.00px;font-size:10px;color:#000;transform:scaleX(0.8850);transform-origin:0 0">PIN-Komplexität</div>
<div style="position:absolute;left:60px;top:653px;line-height:0"><svg width="5" height="8" viewBox="0 0 5 8"><path d="M1.1 1l2.8 3-2.8 3" fill="none" stroke="#a6a6a6" stroke-width="1.1"/></svg></div>
<div style="position:absolute;left:71px;top:651px;line-height:0"><svg width="11" height="10" viewBox="0 0 11 10"><path d="M0.5 1.5h3l1 1h5.5v7h-9.5z" fill="url(#fg)" stroke="#e2c277" stroke-width="1"/><path d="M6.2 0.5h3.8v2.2h-3.8z" fill="#fdfaf0" stroke="#e2c277" stroke-width="0.8"/><path d="M7.4 1h2.2v1h-2.2z" fill="#9cc8e8"/></svg></div>
<div class="t" style="left:86.30px;top:652.00px;font-size:10px;color:#000;transform:scaleX(0.8850);transform-origin:0 0">Problembehandlung und Diagnose</div>
<div style="position:absolute;left:71px;top:664px;line-height:0"><svg width="11" height="10" viewBox="0 0 11 10"><path d="M0.5 1.5h3l1 1h5.5v7h-9.5z" fill="url(#fg)" stroke="#e2c277" stroke-width="1"/><path d="M6.2 0.5h3.8v2.2h-3.8z" fill="#fdfaf0" stroke="#e2c277" stroke-width="0.8"/><path d="M7.4 1h2.2v1h-2.2z" fill="#9cc8e8"/></svg></div>
<div class="t" style="left:86.30px;top:665.00px;font-size:10px;color:#000;transform:scaleX(0.8850);transform-origin:0 0">Remoteunterstützung</div>
</div>
<div style="position:absolute;left:263px;top:55px;width:13px;height:665px;background:#f0f0f0;"></div>
<div style="position:absolute;left:264px;top:76px;width:10px;height:413px;background:#cdcdcd;"></div>
<div style="position:absolute;left:266px;top:60px;line-height:0"><svg width="7" height="5" viewBox="0 0 7 5"><path d="M0.7 4l2.8-2.8 2.8 2.8" fill="none" stroke="#505050" stroke-width="1.3"/></svg></div>
<div style="position:absolute;left:266px;top:711px;line-height:0"><svg width="7" height="5" viewBox="0 0 7 5"><path d="M0.7 1l2.8 2.8 2.8-2.8" fill="none" stroke="#505050" stroke-width="1.3"/></svg></div>
<div style="position:absolute;left:1px;top:720px;width:262px;height:13px;background:#f0f0f0;"></div>
<div style="position:absolute;left:14px;top:721px;width:137px;height:10px;background:#cdcdcd;"></div>
<div style="position:absolute;left:5px;top:722px;line-height:0"><svg width="5" height="8" viewBox="0 0 5 8"><path d="M4 1.2l-2.8 2.8 2.8 2.8" fill="none" stroke="#505050" stroke-width="1.4"/></svg></div>
<div style="position:absolute;left:255px;top:722px;line-height:0"><svg width="5" height="8" viewBox="0 0 5 8"><path d="M1 1.2l2.8 2.8-2.8 2.8" fill="none" stroke="#505050" stroke-width="1.4"/></svg></div>
<div style="position:absolute;left:263px;top:720px;width:13px;height:13px;background:#f0f0f0;"></div>
<div style="position:absolute;left:281px;top:56px;width:629px;height:17px;background:#99b4d1;"></div>
<div style="position:absolute;left:287px;top:60px;line-height:0"><svg width="11" height="10" viewBox="0 0 11 10"><path d="M0.5 1.5h3l1 1h5.5v7h-9.5z" fill="url(#fg)" stroke="#e2c277" stroke-width="1"/><path d="M6.2 0.5h3.8v2.2h-3.8z" fill="#fdfaf0" stroke="#e2c277" stroke-width="0.8"/><path d="M7.4 1h2.2v1h-2.2z" fill="#9cc8e8"/></svg></div>
<div class="t" style="left:305.80px;top:61.00px;font-size:10px;color:#000;transform:scaleX(0.8808);transform-origin:0 0">Gruppenrichtlinie</div>
<div style="position:absolute;left:426px;top:66px;width:484px;height:10px;background:#fff;border-top-left-radius:6px"></div>
<div class="t" style="left:284.10px;top:78.00px;font-size:8.8px;color:#000;transform:scaleX(0.9697);transform-origin:0 0">Markieren Sie ein Element, um dessen</div>
<div class="t" style="left:284.10px;top:88.00px;font-size:8.8px;color:#000;transform:scaleX(0.9584);transform-origin:0 0">Beschreibung anzuzeigen.</div>
<div class="t" style="left:437.60px;top:78.00px;font-size:10px;color:#000;transform:scaleX(0.8790);transform-origin:0 0">Einstellung</div>
<div class="t" style="left:706.42px;top:78.00px;font-size:10px;color:#000;transform:scaleX(0.8790);transform-origin:50% 0">Status</div>
<div class="t" style="left:803.06px;top:78.00px;font-size:10px;color:#000;transform:scaleX(0.8790);transform-origin:50% 0">Kommentar</div>
<div style="position:absolute;left:684px;top:73px;width:1px;height:18px;background:#e5e5e5;"></div>
<div style="position:absolute;left:756px;top:73px;width:1px;height:18px;background:#e5e5e5;"></div>
<div style="position:absolute;left:901px;top:73px;width:1px;height:18px;background:#e5e5e5;"></div>
<div style="position:absolute;left:281px;top:88px;width:629px;height:631px;overflow:hidden">
<div style="position:absolute;left:155px;top:4px;line-height:0"><svg width="11" height="10" viewBox="0 0 11 10"><path d="M0.5 1.5h3l1 1h5.5v7h-9.5z" fill="url(#fg)" stroke="#e2c277" stroke-width="1"/><path d="M6.2 0.5h3.8v2.2h-3.8z" fill="#fdfaf0" stroke="#e2c277" stroke-width="0.8"/><path d="M7.4 1h2.2v1h-2.2z" fill="#9cc8e8"/></svg></div>
<div class="t" style="left:168.20px;top:6.00px;font-size:10px;color:#000;transform:scaleX(0.8660);transform-origin:0 0">Logging and tracing</div>
<div style="position:absolute;left:155px;top:18px;line-height:0"><svg width="10" height="11" viewBox="0 0 10 11"><path d="M0.5 0.5h6.5l2.5 2.5v7.5h-9z" fill="#fff" stroke="#c6c6c6" stroke-width="1"/><path d="M7 0.5v2.5h2.5" fill="#f0f0f0" stroke="#d0d0d0" stroke-width="0.8"/><rect x="0" y="1" width="1" height="10" fill="#bdbdbd"/><rect x="0.5" y="9.6" width="9" height="1" fill="#c4c4c4"/><circle cx="2.9" cy="3.4" r="0.85" fill="#111"/><rect x="4.2" y="3.1" width="3.4" height="0.6" fill="#9aa4d8"/><circle cx="2.9" cy="5.5" r="0.55" fill="#6a74b8"/><rect x="4.2" y="5.3" width="3.4" height="0.6" fill="#9aa4d8"/><circle cx="2.9" cy="7.6" r="0.85" fill="#111"/><rect x="4.2" y="7.4" width="3.4" height="0.6" fill="#9aa4d8"/></svg></div>
<div class="t" style="left:168.20px;top:20.00px;font-size:10px;color:#000;transform:scaleX(0.8487);transform-origin:0 0">Gesamtstrukturübergreifende Benutzerrichtlinien und server…</div>
<div class="t" style="left:409.40px;top:20.00px;font-size:10px;color:#000;transform:scaleX(0.8817);transform-origin:0 0">Nicht konfigur…</div>
<div class="t" style="left:539.00px;top:20.00px;font-size:10px;color:#000;transform:scaleX(0.8790);transform-origin:0 0">Nein</div>
<div style="position:absolute;left:155px;top:32px;line-height:0"><svg width="10" height="11" viewBox="0 0 10 11"><path d="M0.5 0.5h6.5l2.5 2.5v7.5h-9z" fill="#fff" stroke="#c6c6c6" stroke-width="1"/><path d="M7 0.5v2.5h2.5" fill="#f0f0f0" stroke="#d0d0d0" stroke-width="0.8"/><rect x="0" y="1" width="1" height="10" fill="#bdbdbd"/><rect x="0.5" y="9.6" width="9" height="1" fill="#c4c4c4"/><circle cx="2.9" cy="3.4" r="0.85" fill="#111"/><rect x="4.2" y="3.1" width="3.4" height="0.6" fill="#9aa4d8"/><circle cx="2.9" cy="5.5" r="0.55" fill="#6a74b8"/><rect x="4.2" y="5.3" width="3.4" height="0.6" fill="#9aa4d8"/><circle cx="2.9" cy="7.6" r="0.85" fill="#111"/><rect x="4.2" y="7.4" width="3.4" height="0.6" fill="#9aa4d8"/></svg></div>
<div class="t" style="left:168.20px;top:33.00px;font-size:10px;color:#000;transform:scaleX(0.8660);transform-origin:0 0">Softwareinstallations-Richtlinienverarbeitung konfigurieren</div>
<div class="t" style="left:421.82px;top:33.00px;font-size:10px;color:#000;transform:scaleX(0.8790);transform-origin:50% 0">Aktiviert</div>
<div class="t" style="left:539.00px;top:33.00px;font-size:10px;color:#000;transform:scaleX(0.8790);transform-origin:0 0">Nein</div>
<div style="position:absolute;left:155px;top:45px;line-height:0"><svg width="10" height="11" viewBox="0 0 10 11"><path d="M0.5 0.5h6.5l2.5 2.5v7.5h-9z" fill="#fff" stroke="#c6c6c6" stroke-width="1"/><path d="M7 0.5v2.5h2.5" fill="#f0f0f0" stroke="#d0d0d0" stroke-width="0.8"/><rect x="0" y="1" width="1" height="10" fill="#bdbdbd"/><rect x="0.5" y="9.6" width="9" height="1" fill="#c4c4c4"/><circle cx="2.9" cy="3.4" r="0.85" fill="#111"/><rect x="4.2" y="3.1" width="3.4" height="0.6" fill="#9aa4d8"/><circle cx="2.9" cy="5.5" r="0.55" fill="#6a74b8"/><rect x="4.2" y="5.3" width="3.4" height="0.6" fill="#9aa4d8"/><circle cx="2.9" cy="7.6" r="0.85" fill="#111"/><rect x="4.2" y="7.4" width="3.4" height="0.6" fill="#9aa4d8"/></svg></div>
<div class="t" style="left:168.20px;top:47.00px;font-size:10px;color:#000;transform:scaleX(0.8592);transform-origin:0 0">Verarbeitung der Datenträgerkontingentrichtlinie konfigurier…</div>
<div class="t" style="left:409.40px;top:47.00px;font-size:10px;color:#000;transform:scaleX(0.8817);transform-origin:0 0">Nicht konfigur…</div>
<div class="t" style="left:539.00px;top:47.00px;font-size:10px;color:#000;transform:scaleX(0.8790);transform-origin:0 0">Nein</div>
<div style="position:absolute;left:155px;top:59px;line-height:0"><svg width="10" height="11" viewBox="0 0 10 11"><path d="M0.5 0.5h6.5l2.5 2.5v7.5h-9z" fill="#fff" stroke="#c6c6c6" stroke-width="1"/><path d="M7 0.5v2.5h2.5" fill="#f0f0f0" stroke="#d0d0d0" stroke-width="0.8"/><rect x="0" y="1" width="1" height="10" fill="#bdbdbd"/><rect x="0.5" y="9.6" width="9" height="1" fill="#c4c4c4"/><circle cx="2.9" cy="3.4" r="0.85" fill="#111"/><rect x="4.2" y="3.1" width="3.4" height="0.6" fill="#9aa4d8"/><circle cx="2.9" cy="5.5" r="0.55" fill="#6a74b8"/><rect x="4.2" y="5.3" width="3.4" height="0.6" fill="#9aa4d8"/><circle cx="2.9" cy="7.6" r="0.85" fill="#111"/><rect x="4.2" y="7.4" width="3.4" height="0.6" fill="#9aa4d8"/></svg></div>
<div class="t" style="left:168.20px;top:61.00px;font-size:10px;color:#000;transform:scaleX(0.8474);transform-origin:0 0">Verarbeitung der Richtlinien für die EFS-Wiederherstellung k…</div>
<div class="t" style="left:409.40px;top:61.00px;font-size:10px;color:#000;transform:scaleX(0.8817);transform-origin:0 0">Nicht konfigur…</div>
<div class="t" style="left:539.00px;top:61.00px;font-size:10px;color:#000;transform:scaleX(0.8790);transform-origin:0 0">Nein</div>
<div style="position:absolute;left:155px;top:73px;line-height:0"><svg width="10" height="11" viewBox="0 0 10 11"><path d="M0.5 0.5h6.5l2.5 2.5v7.5h-9z" fill="#fff" stroke="#c6c6c6" stroke-width="1"/><path d="M7 0.5v2.5h2.5" fill="#f0f0f0" stroke="#d0d0d0" stroke-width="0.8"/><rect x="0" y="1" width="1" height="10" fill="#bdbdbd"/><rect x="0.5" y="9.6" width="9" height="1" fill="#c4c4c4"/><circle cx="2.9" cy="3.4" r="0.85" fill="#111"/><rect x="4.2" y="3.1" width="3.4" height="0.6" fill="#9aa4d8"/><circle cx="2.9" cy="5.5" r="0.55" fill="#6a74b8"/><rect x="4.2" y="5.3" width="3.4" height="0.6" fill="#9aa4d8"/><circle cx="2.9" cy="7.6" r="0.85" fill="#111"/><rect x="4.2" y="7.4" width="3.4" height="0.6" fill="#9aa4d8"/></svg></div>
<div class="t" style="left:168.20px;top:75.00px;font-size:10px;color:#000;transform:scaleX(0.8660);transform-origin:0 0">Verarbeitung der Ordnerumleitungsrichtlinien konfigurieren</div>
<div class="t" style="left:409.40px;top:75.00px;font-size:10px;color:#000;transform:scaleX(0.8817);transform-origin:0 0">Nicht konfigur…</div>
<div class="t" style="left:539.00px;top:75.00px;font-size:10px;color:#000;transform:scaleX(0.8790);transform-origin:0 0">Nein</div>
<div style="position:absolute;left:155px;top:86px;line-height:0"><svg width="10" height="11" viewBox="0 0 10 11"><path d="M0.5 0.5h6.5l2.5 2.5v7.5h-9z" fill="#fff" stroke="#c6c6c6" stroke-width="1"/><path d="M7 0.5v2.5h2.5" fill="#f0f0f0" stroke="#d0d0d0" stroke-width="0.8"/><rect x="0" y="1" width="1" height="10" fill="#bdbdbd"/><rect x="0.5" y="9.6" width="9" height="1" fill="#c4c4c4"/><circle cx="2.9" cy="3.4" r="0.85" fill="#111"/><rect x="4.2" y="3.1" width="3.4" height="0.6" fill="#9aa4d8"/><circle cx="2.9" cy="5.5" r="0.55" fill="#6a74b8"/><rect x="4.2" y="5.3" width="3.4" height="0.6" fill="#9aa4d8"/><circle cx="2.9" cy="7.6" r="0.85" fill="#111"/><rect x="4.2" y="7.4" width="3.4" height="0.6" fill="#9aa4d8"/></svg></div>
<div class="t" style="left:168.20px;top:88.00px;font-size:10px;color:#000;transform:scaleX(0.8538);transform-origin:0 0">Verarbeitung der Richtlinie für die Internet Explorer-Wartung…</div>
<div class="t" style="left:409.40px;top:88.00px;font-size:10px;color:#000;transform:scaleX(0.8817);transform-origin:0 0">Nicht konfigur…</div>
<div class="t" style="left:539.00px;top:88.00px;font-size:10px;color:#000;transform:scaleX(0.8790);transform-origin:0 0">Nein</div>
<div style="position:absolute;left:155px;top:100px;line-height:0"><svg width="10" height="11" viewBox="0 0 10 11"><path d="M0.5 0.5h6.5l2.5 2.5v7.5h-9z" fill="#fff" stroke="#c6c6c6" stroke-width="1"/><path d="M7 0.5v2.5h2.5" fill="#f0f0f0" stroke="#d0d0d0" stroke-width="0.8"/><rect x="0" y="1" width="1" height="10" fill="#bdbdbd"/><rect x="0.5" y="9.6" width="9" height="1" fill="#c4c4c4"/><circle cx="2.9" cy="3.4" r="0.85" fill="#111"/><rect x="4.2" y="3.1" width="3.4" height="0.6" fill="#9aa4d8"/><circle cx="2.9" cy="5.5" r="0.55" fill="#6a74b8"/><rect x="4.2" y="5.3" width="3.4" height="0.6" fill="#9aa4d8"/><circle cx="2.9" cy="7.6" r="0.85" fill="#111"/><rect x="4.2" y="7.4" width="3.4" height="0.6" fill="#9aa4d8"/></svg></div>
<div class="t" style="left:168.20px;top:102.00px;font-size:10px;color:#000;transform:scaleX(0.8660);transform-origin:0 0">Verarbeitung der IP-Sicherheitsrichtlinie konfigurieren</div>
<div class="t" style="left:409.40px;top:102.00px;font-size:10px;color:#000;transform:scaleX(0.8817);transform-origin:0 0">Nicht konfigur…</div>
<div class="t" style="left:539.00px;top:102.00px;font-size:10px;color:#000;transform:scaleX(0.8790);transform-origin:0 0">Nein</div>
<div style="position:absolute;left:155px;top:114px;line-height:0"><svg width="10" height="11" viewBox="0 0 10 11"><path d="M0.5 0.5h6.5l2.5 2.5v7.5h-9z" fill="#fff" stroke="#c6c6c6" stroke-width="1"/><path d="M7 0.5v2.5h2.5" fill="#f0f0f0" stroke="#d0d0d0" stroke-width="0.8"/><rect x="0" y="1" width="1" height="10" fill="#bdbdbd"/><rect x="0.5" y="9.6" width="9" height="1" fill="#c4c4c4"/><circle cx="2.9" cy="3.4" r="0.85" fill="#111"/><rect x="4.2" y="3.1" width="3.4" height="0.6" fill="#9aa4d8"/><circle cx="2.9" cy="5.5" r="0.55" fill="#6a74b8"/><rect x="4.2" y="5.3" width="3.4" height="0.6" fill="#9aa4d8"/><circle cx="2.9" cy="7.6" r="0.85" fill="#111"/><rect x="4.2" y="7.4" width="3.4" height="0.6" fill="#9aa4d8"/></svg></div>
<div class="t" style="left:168.20px;top:116.00px;font-size:10px;color:#000;transform:scaleX(0.8660);transform-origin:0 0">Registrierungsrichtlinienverarbeitung konfigurieren</div>
<div class="t" style="left:409.40px;top:116.00px;font-size:10px;color:#000;transform:scaleX(0.8817);transform-origin:0 0">Nicht konfigur…</div>
<div class="t" style="left:539.00px;top:116.00px;font-size:10px;color:#000;transform:scaleX(0.8790);transform-origin:0 0">Nein</div>
<div style="position:absolute;left:155px;top:128px;line-height:0"><svg width="10" height="11" viewBox="0 0 10 11"><path d="M0.5 0.5h6.5l2.5 2.5v7.5h-9z" fill="#fff" stroke="#c6c6c6" stroke-width="1"/><path d="M7 0.5v2.5h2.5" fill="#f0f0f0" stroke="#d0d0d0" stroke-width="0.8"/><rect x="0" y="1" width="1" height="10" fill="#bdbdbd"/><rect x="0.5" y="9.6" width="9" height="1" fill="#c4c4c4"/><circle cx="2.9" cy="3.4" r="0.85" fill="#111"/><rect x="4.2" y="3.1" width="3.4" height="0.6" fill="#9aa4d8"/><circle cx="2.9" cy="5.5" r="0.55" fill="#6a74b8"/><rect x="4.2" y="5.3" width="3.4" height="0.6" fill="#9aa4d8"/><circle cx="2.9" cy="7.6" r="0.85" fill="#111"/><rect x="4.2" y="7.4" width="3.4" height="0.6" fill="#9aa4d8"/></svg></div>
<div class="t" style="left:168.20px;top:129.00px;font-size:10px;color:#000;transform:scaleX(0.8660);transform-origin:0 0">Skriptrichtlinienverarbeitung konfigurieren</div>
<div class="t" style="left:409.40px;top:129.00px;font-size:10px;color:#000;transform:scaleX(0.8817);transform-origin:0 0">Nicht konfigur…</div>
<div class="t" style="left:539.00px;top:129.00px;font-size:10px;color:#000;transform:scaleX(0.8790);transform-origin:0 0">Nein</div>
<div style="position:absolute;left:155px;top:141px;line-height:0"><svg width="10" height="11" viewBox="0 0 10 11"><path d="M0.5 0.5h6.5l2.5 2.5v7.5h-9z" fill="#fff" stroke="#c6c6c6" stroke-width="1"/><path d="M7 0.5v2.5h2.5" fill="#f0f0f0" stroke="#d0d0d0" stroke-width="0.8"/><rect x="0" y="1" width="1" height="10" fill="#bdbdbd"/><rect x="0.5" y="9.6" width="9" height="1" fill="#c4c4c4"/><circle cx="2.9" cy="3.4" r="0.85" fill="#111"/><rect x="4.2" y="3.1" width="3.4" height="0.6" fill="#9aa4d8"/><circle cx="2.9" cy="5.5" r="0.55" fill="#6a74b8"/><rect x="4.2" y="5.3" width="3.4" height="0.6" fill="#9aa4d8"/><circle cx="2.9" cy="7.6" r="0.85" fill="#111"/><rect x="4.2" y="7.4" width="3.4" height="0.6" fill="#9aa4d8"/></svg></div>
<div class="t" style="left:168.20px;top:143.00px;font-size:10px;color:#000;transform:scaleX(0.8660);transform-origin:0 0">Sicherheitsrichtlinienverarbeitung konfigurieren</div>
<div class="t" style="left:409.40px;top:143.00px;font-size:10px;color:#000;transform:scaleX(0.8817);transform-origin:0 0">Nicht konfigur…</div>
<div class="t" style="left:539.00px;top:143.00px;font-size:10px;color:#000;transform:scaleX(0.8790);transform-origin:0 0">Nein</div>
<div style="position:absolute;left:155px;top:155px;line-height:0"><svg width="10" height="11" viewBox="0 0 10 11"><path d="M0.5 0.5h6.5l2.5 2.5v7.5h-9z" fill="#fff" stroke="#c6c6c6" stroke-width="1"/><path d="M7 0.5v2.5h2.5" fill="#f0f0f0" stroke="#d0d0d0" stroke-width="0.8"/><rect x="0" y="1" width="1" height="10" fill="#bdbdbd"/><rect x="0.5" y="9.6" width="9" height="1" fill="#c4c4c4"/><circle cx="2.9" cy="3.4" r="0.85" fill="#111"/><rect x="4.2" y="3.1" width="3.4" height="0.6" fill="#9aa4d8"/><circle cx="2.9" cy="5.5" r="0.55" fill="#6a74b8"/><rect x="4.2" y="5.3" width="3.4" height="0.6" fill="#9aa4d8"/><circle cx="2.9" cy="7.6" r="0.85" fill="#111"/><rect x="4.2" y="7.4" width="3.4" height="0.6" fill="#9aa4d8"/></svg></div>
<div class="t" style="left:168.20px;top:157.00px;font-size:10px;color:#000;transform:scaleX(0.8524);transform-origin:0 0">Richtlinienverarbeitung für verkabelte Netzwerke konfigurier…</div>
<div class="t" style="left:421.82px;top:157.00px;font-size:10px;color:#000;transform:scaleX(0.8790);transform-origin:50% 0">Aktiviert</div>
<div class="t" style="left:539.00px;top:157.00px;font-size:10px;color:#000;transform:scaleX(0.8790);transform-origin:0 0">Nein</div>
<div style="position:absolute;left:155px;top:169px;line-height:0"><svg width="10" height="11" viewBox="0 0 10 11"><path d="M0.5 0.5h6.5l2.5 2.5v7.5h-9z" fill="#fff" stroke="#c6c6c6" stroke-width="1"/><path d="M7 0.5v2.5h2.5" fill="#f0f0f0" stroke="#d0d0d0" stroke-width="0.8"/><rect x="0" y="1" width="1" height="10" fill="#bdbdbd"/><rect x="0.5" y="9.6" width="9" height="1" fill="#c4c4c4"/><circle cx="2.9" cy="3.4" r="0.85" fill="#111"/><rect x="4.2" y="3.1" width="3.4" height="0.6" fill="#9aa4d8"/><circle cx="2.9" cy="5.5" r="0.55" fill="#6a74b8"/><rect x="4.2" y="5.3" width="3.4" height="0.6" fill="#9aa4d8"/><circle cx="2.9" cy="7.6" r="0.85" fill="#111"/><rect x="4.2" y="7.4" width="3.4" height="0.6" fill="#9aa4d8"/></svg></div>
<div class="t" style="left:168.20px;top:171.00px;font-size:10px;color:#000;transform:scaleX(0.8660);transform-origin:0 0">Verarbeitung der Richtlinien für Funknetzwerke konfigurieren</div>
<div class="t" style="left:421.82px;top:171.00px;font-size:10px;color:#000;transform:scaleX(0.8790);transform-origin:50% 0">Aktiviert</div>
<div class="t" style="left:539.00px;top:171.00px;font-size:10px;color:#000;transform:scaleX(0.8790);transform-origin:0 0">Nein</div>
<div style="position:absolute;left:155px;top:182px;line-height:0"><svg width="10" height="11" viewBox="0 0 10 11"><path d="M0.5 0.5h6.5l2.5 2.5v7.5h-9z" fill="#fff" stroke="#c6c6c6" stroke-width="1"/><path d="M7 0.5v2.5h2.5" fill="#f0f0f0" stroke="#d0d0d0" stroke-width="0.8"/><rect x="0" y="1" width="1" height="10" fill="#bdbdbd"/><rect x="0.5" y="9.6" width="9" height="1" fill="#c4c4c4"/><circle cx="2.9" cy="3.4" r="0.85" fill="#111"/><rect x="4.2" y="3.1" width="3.4" height="0.6" fill="#9aa4d8"/><circle cx="2.9" cy="5.5" r="0.55" fill="#6a74b8"/><rect x="4.2" y="5.3" width="3.4" height="0.6" fill="#9aa4d8"/><circle cx="2.9" cy="7.6" r="0.85" fill="#111"/><rect x="4.2" y="7.4" width="3.4" height="0.6" fill="#9aa4d8"/></svg></div>
<div class="t" style="left:168.20px;top:184.00px;font-size:10px;color:#000;transform:scaleX(0.8571);transform-origin:0 0">Wartezeit der Arbeitsbereichskonnektivität für Richtlinienver…</div>
<div class="t" style="left:421.82px;top:184.00px;font-size:10px;color:#000;transform:scaleX(0.8790);transform-origin:50% 0">Aktiviert</div>
<div class="t" style="left:539.00px;top:184.00px;font-size:10px;color:#000;transform:scaleX(0.8790);transform-origin:0 0">Nein</div>
<div style="position:absolute;left:155px;top:196px;line-height:0"><svg width="10" height="11" viewBox="0 0 10 11"><path d="M0.5 0.5h6.5l2.5 2.5v7.5h-9z" fill="#fff" stroke="#c6c6c6" stroke-width="1"/><path d="M7 0.5v2.5h2.5" fill="#f0f0f0" stroke="#d0d0d0" stroke-width="0.8"/><rect x="0" y="1" width="1" height="10" fill="#bdbdbd"/><rect x="0.5" y="9.6" width="9" height="1" fill="#c4c4c4"/><circle cx="2.9" cy="3.4" r="0.85" fill="#111"/><rect x="4.2" y="3.1" width="3.4" height="0.6" fill="#9aa4d8"/><circle cx="2.9" cy="5.5" r="0.55" fill="#6a74b8"/><rect x="4.2" y="5.3" width="3.4" height="0.6" fill="#9aa4d8"/><circle cx="2.9" cy="7.6" r="0.85" fill="#111"/><rect x="4.2" y="7.4" width="3.4" height="0.6" fill="#9aa4d8"/></svg></div>
<div class="t" style="left:168.20px;top:198.00px;font-size:10px;color:#000;transform:scaleX(0.8403);transform-origin:0 0">Festlegen, ob interaktive Benutzer Richtlinienergebnissatzda…</div>
<div class="t" style="left:409.40px;top:198.00px;font-size:10px;color:#000;transform:scaleX(0.8817);transform-origin:0 0">Nicht konfigur…</div>
<div class="t" style="left:539.00px;top:198.00px;font-size:10px;color:#000;transform:scaleX(0.8790);transform-origin:0 0">Nein</div>
<div style="position:absolute;left:155px;top:210px;line-height:0"><svg width="10" height="11" viewBox="0 0 10 11"><path d="M0.5 0.5h6.5l2.5 2.5v7.5h-9z" fill="#fff" stroke="#c6c6c6" stroke-width="1"/><path d="M7 0.5v2.5h2.5" fill="#f0f0f0" stroke="#d0d0d0" stroke-width="0.8"/><rect x="0" y="1" width="1" height="10" fill="#bdbdbd"/><rect x="0.5" y="9.6" width="9" height="1" fill="#c4c4c4"/><circle cx="2.9" cy="3.4" r="0.85" fill="#111"/><rect x="4.2" y="3.1" width="3.4" height="0.6" fill="#9aa4d8"/><circle cx="2.9" cy="5.5" r="0.55" fill="#6a74b8"/><rect x="4.2" y="5.3" width="3.4" height="0.6" fill="#9aa4d8"/><circle cx="2.9" cy="7.6" r="0.85" fill="#111"/><rect x="4.2" y="7.4" width="3.4" height="0.6" fill="#9aa4d8"/></svg></div>
<div class="t" style="left:168.20px;top:212.00px;font-size:10px;color:#000;transform:scaleX(0.8557);transform-origin:0 0">AOAC-Optimierung des Gruppenrichtlinienclient-Diensts de…</div>
<div class="t" style="left:409.40px;top:212.00px;font-size:10px;color:#000;transform:scaleX(0.8817);transform-origin:0 0">Nicht konfigur…</div>
<div class="t" style="left:539.00px;top:212.00px;font-size:10px;color:#000;transform:scaleX(0.8790);transform-origin:0 0">Nein</div>
<div style="position:absolute;left:155px;top:224px;line-height:0"><svg width="10" height="11" viewBox="0 0 10 11"><path d="M0.5 0.5h6.5l2.5 2.5v7.5h-9z" fill="#fff" stroke="#c6c6c6" stroke-width="1"/><path d="M7 0.5v2.5h2.5" fill="#f0f0f0" stroke="#d0d0d0" stroke-width="0.8"/><rect x="0" y="1" width="1" height="10" fill="#bdbdbd"/><rect x="0.5" y="9.6" width="9" height="1" fill="#c4c4c4"/><circle cx="2.9" cy="3.4" r="0.85" fill="#111"/><rect x="4.2" y="3.1" width="3.4" height="0.6" fill="#9aa4d8"/><circle cx="2.9" cy="5.5" r="0.55" fill="#6a74b8"/><rect x="4.2" y="5.3" width="3.4" height="0.6" fill="#9aa4d8"/><circle cx="2.9" cy="7.6" r="0.85" fill="#111"/><rect x="4.2" y="7.4" width="3.4" height="0.6" fill="#9aa4d8"/></svg></div>
<div class="t" style="left:168.20px;top:225.00px;font-size:10px;color:#000;transform:scaleX(0.8660);transform-origin:0 0">Hintergrundaktualisierung der Gruppenrichtlinie deaktivieren</div>
<div class="t" style="left:409.40px;top:225.00px;font-size:10px;color:#000;transform:scaleX(0.8817);transform-origin:0 0">Nicht konfigur…</div>
<div class="t" style="left:539.00px;top:225.00px;font-size:10px;color:#000;transform:scaleX(0.8790);transform-origin:0 0">Nein</div>
<div style="position:absolute;left:155px;top:237px;line-height:0"><svg width="10" height="11" viewBox="0 0 10 11"><path d="M0.5 0.5h6.5l2.5 2.5v7.5h-9z" fill="#fff" stroke="#c6c6c6" stroke-width="1"/><path d="M7 0.5v2.5h2.5" fill="#f0f0f0" stroke="#d0d0d0" stroke-width="0.8"/><rect x="0" y="1" width="1" height="10" fill="#bdbdbd"/><rect x="0.5" y="9.6" width="9" height="1" fill="#c4c4c4"/><circle cx="2.9" cy="3.4" r="0.85" fill="#111"/><rect x="4.2" y="3.1" width="3.4" height="0.6" fill="#9aa4d8"/><circle cx="2.9" cy="5.5" r="0.55" fill="#6a74b8"/><rect x="4.2" y="5.3" width="3.4" height="0.6" fill="#9aa4d8"/><circle cx="2.9" cy="7.6" r="0.85" fill="#111"/><rect x="4.2" y="7.4" width="3.4" height="0.6" fill="#9aa4d8"/></svg></div>
<div class="t" style="left:168.20px;top:239.00px;font-size:10px;color:#000;transform:scaleX(0.8660);transform-origin:0 0">Verarbeitung lokaler Gruppenrichtlinienobjekte deaktivieren</div>
<div class="t" style="left:409.40px;top:239.00px;font-size:10px;color:#000;transform:scaleX(0.8817);transform-origin:0 0">Nicht konfigur…</div>
<div class="t" style="left:539.00px;top:239.00px;font-size:10px;color:#000;transform:scaleX(0.8790);transform-origin:0 0">Nein</div>
<div style="position:absolute;left:155px;top:251px;line-height:0"><svg width="10" height="11" viewBox="0 0 10 11"><path d="M0.5 0.5h6.5l2.5 2.5v7.5h-9z" fill="#fff" stroke="#c6c6c6" stroke-width="1"/><path d="M7 0.5v2.5h2.5" fill="#f0f0f0" stroke="#d0d0d0" stroke-width="0.8"/><rect x="0" y="1" width="1" height="10" fill="#bdbdbd"/><rect x="0.5" y="9.6" width="9" height="1" fill="#c4c4c4"/><circle cx="2.9" cy="3.4" r="0.85" fill="#111"/><rect x="4.2" y="3.1" width="3.4" height="0.6" fill="#9aa4d8"/><circle cx="2.9" cy="5.5" r="0.55" fill="#6a74b8"/><rect x="4.2" y="5.3" width="3.4" height="0.6" fill="#9aa4d8"/><circle cx="2.9" cy="7.6" r="0.85" fill="#111"/><rect x="4.2" y="7.4" width="3.4" height="0.6" fill="#9aa4d8"/></svg></div>
<div class="t" style="left:168.20px;top:253.00px;font-size:10px;color:#000;transform:scaleX(0.8739);transform-origin:0 0">Aktualisierung der Computerrichtlinie durch Benutzer verhi…</div>
<div class="t" style="left:409.40px;top:253.00px;font-size:10px;color:#000;transform:scaleX(0.8817);transform-origin:0 0">Nicht konfigur…</div>
<div class="t" style="left:539.00px;top:253.00px;font-size:10px;color:#000;transform:scaleX(0.8790);transform-origin:0 0">Nein</div>
<div style="position:absolute;left:155px;top:265px;line-height:0"><svg width="10" height="11" viewBox="0 0 10 11"><path d="M0.5 0.5h6.5l2.5 2.5v7.5h-9z" fill="#fff" stroke="#c6c6c6" stroke-width="1"/><path d="M7 0.5v2.5h2.5" fill="#f0f0f0" stroke="#d0d0d0" stroke-width="0.8"/><rect x="0" y="1" width="1" height="10" fill="#bdbdbd"/><rect x="0.5" y="9.6" width="9" height="1" fill="#c4c4c4"/><circle cx="2.9" cy="3.4" r="0.85" fill="#111"/><rect x="4.2" y="3.1" width="3.4" height="0.6" fill="#9aa4d8"/><circle cx="2.9" cy="5.5" r="0.55" fill="#6a74b8"/><rect x="4.2" y="5.3" width="3.4" height="0.6" fill="#9aa4d8"/><circle cx="2.9" cy="7.6" r="0.85" fill="#111"/><rect x="4.2" y="7.4" width="3.4" height="0.6" fill="#9aa4d8"/></svg></div>
<div class="t" style="left:168.20px;top:266.00px;font-size:10px;color:#000;transform:scaleX(0.8780);transform-origin:0 0">Web-zu-App-Verknüpfung mit App-URI-Handlern konfiguri…</div>
<div class="t" style="left:409.40px;top:266.00px;font-size:10px;color:#000;transform:scaleX(0.8817);transform-origin:0 0">Nicht konfigur…</div>
<div class="t" style="left:539.00px;top:266.00px;font-size:10px;color:#000;transform:scaleX(0.8790);transform-origin:0 0">Nein</div>
<div style="position:absolute;left:155px;top:278px;line-height:0"><svg width="10" height="11" viewBox="0 0 10 11"><path d="M0.5 0.5h6.5l2.5 2.5v7.5h-9z" fill="#fff" stroke="#c6c6c6" stroke-width="1"/><path d="M7 0.5v2.5h2.5" fill="#f0f0f0" stroke="#d0d0d0" stroke-width="0.8"/><rect x="0" y="1" width="1" height="10" fill="#bdbdbd"/><rect x="0.5" y="9.6" width="9" height="1" fill="#c4c4c4"/><circle cx="2.9" cy="3.4" r="0.85" fill="#111"/><rect x="4.2" y="3.1" width="3.4" height="0.6" fill="#9aa4d8"/><circle cx="2.9" cy="5.5" r="0.55" fill="#6a74b8"/><rect x="4.2" y="5.3" width="3.4" height="0.6" fill="#9aa4d8"/><circle cx="2.9" cy="7.6" r="0.85" fill="#111"/><rect x="4.2" y="7.4" width="3.4" height="0.6" fill="#9aa4d8"/></svg></div>
<div class="t" style="left:168.20px;top:280.00px;font-size:10px;color:#000;transform:scaleX(0.8660);transform-origin:0 0">Auf der Oberfläche dieses Geräts weiterarbeiten</div>
<div class="t" style="left:409.40px;top:280.00px;font-size:10px;color:#000;transform:scaleX(0.8817);transform-origin:0 0">Nicht konfigur…</div>
<div class="t" style="left:539.00px;top:280.00px;font-size:10px;color:#000;transform:scaleX(0.8790);transform-origin:0 0">Nein</div>
<div style="position:absolute;left:155px;top:292px;line-height:0"><svg width="10" height="11" viewBox="0 0 10 11"><path d="M0.5 0.5h6.5l2.5 2.5v7.5h-9z" fill="#fff" stroke="#c6c6c6" stroke-width="1"/><path d="M7 0.5v2.5h2.5" fill="#f0f0f0" stroke="#d0d0d0" stroke-width="0.8"/><rect x="0" y="1" width="1" height="10" fill="#bdbdbd"/><rect x="0.5" y="9.6" width="9" height="1" fill="#c4c4c4"/><circle cx="2.9" cy="3.4" r="0.85" fill="#111"/><rect x="4.2" y="3.1" width="3.4" height="0.6" fill="#9aa4d8"/><circle cx="2.9" cy="5.5" r="0.55" fill="#6a74b8"/><rect x="4.2" y="5.3" width="3.4" height="0.6" fill="#9aa4d8"/><circle cx="2.9" cy="7.6" r="0.85" fill="#111"/><rect x="4.2" y="7.4" width="3.4" height="0.6" fill="#9aa4d8"/></svg></div>
<div class="t" style="left:168.20px;top:294.00px;font-size:10px;color:#000;transform:scaleX(0.8660);transform-origin:0 0">Zwischenspeichern von Gruppenrichtlinien konfigurieren</div>
<div class="t" style="left:409.40px;top:294.00px;font-size:10px;color:#000;transform:scaleX(0.8817);transform-origin:0 0">Nicht konfigur…</div>
<div class="t" style="left:539.00px;top:294.00px;font-size:10px;color:#000;transform:scaleX(0.8790);transform-origin:0 0">Nein</div>
<div style="position:absolute;left:155px;top:306px;line-height:0"><svg width="10" height="11" viewBox="0 0 10 11"><path d="M0.5 0.5h6.5l2.5 2.5v7.5h-9z" fill="#fff" stroke="#c6c6c6" stroke-width="1"/><path d="M7 0.5v2.5h2.5" fill="#f0f0f0" stroke="#d0d0d0" stroke-width="0.8"/><rect x="0" y="1" width="1" height="10" fill="#bdbdbd"/><rect x="0.5" y="9.6" width="9" height="1" fill="#c4c4c4"/><circle cx="2.9" cy="3.4" r="0.85" fill="#111"/><rect x="4.2" y="3.1" width="3.4" height="0.6" fill="#9aa4d8"/><circle cx="2.9" cy="5.5" r="0.55" fill="#6a74b8"/><rect x="4.2" y="5.3" width="3.4" height="0.6" fill="#9aa4d8"/><circle cx="2.9" cy="7.6" r="0.85" fill="#111"/><rect x="4.2" y="7.4" width="3.4" height="0.6" fill="#9aa4d8"/></svg></div>
<div class="t" style="left:168.20px;top:308.00px;font-size:10px;color:#000;transform:scaleX(0.8558);transform-origin:0 0">Aktivieren der Zwischenspeicherung von Gruppenrichtlinien…</div>
<div class="t" style="left:409.40px;top:308.00px;font-size:10px;color:#000;transform:scaleX(0.8817);transform-origin:0 0">Nicht konfigur…</div>
<div class="t" style="left:539.00px;top:308.00px;font-size:10px;color:#000;transform:scaleX(0.8790);transform-origin:0 0">Nein</div>
<div style="position:absolute;left:155px;top:320px;line-height:0"><svg width="10" height="11" viewBox="0 0 10 11"><path d="M0.5 0.5h6.5l2.5 2.5v7.5h-9z" fill="#fff" stroke="#c6c6c6" stroke-width="1"/><path d="M7 0.5v2.5h2.5" fill="#f0f0f0" stroke="#d0d0d0" stroke-width="0.8"/><rect x="0" y="1" width="1" height="10" fill="#bdbdbd"/><rect x="0.5" y="9.6" width="9" height="1" fill="#c4c4c4"/><circle cx="2.9" cy="3.4" r="0.85" fill="#111"/><rect x="4.2" y="3.1" width="3.4" height="0.6" fill="#9aa4d8"/><circle cx="2.9" cy="5.5" r="0.55" fill="#6a74b8"/><rect x="4.2" y="5.3" width="3.4" height="0.6" fill="#9aa4d8"/><circle cx="2.9" cy="7.6" r="0.85" fill="#111"/><rect x="4.2" y="7.4" width="3.4" height="0.6" fill="#9aa4d8"/></svg></div>
<div class="t" style="left:168.20px;top:321.00px;font-size:10px;color:#000;transform:scaleX(0.8660);transform-origin:0 0">Telefon-PC-Verbindung auf diesem Gerät</div>
<div class="t" style="left:409.40px;top:321.00px;font-size:10px;color:#000;transform:scaleX(0.8817);transform-origin:0 0">Nicht konfigur…</div>
<div class="t" style="left:539.00px;top:321.00px;font-size:10px;color:#000;transform:scaleX(0.8790);transform-origin:0 0">Nein</div>
<div style="position:absolute;left:155px;top:333px;line-height:0"><svg width="10" height="11" viewBox="0 0 10 11"><path d="M0.5 0.5h6.5l2.5 2.5v7.5h-9z" fill="#fff" stroke="#c6c6c6" stroke-width="1"/><path d="M7 0.5v2.5h2.5" fill="#f0f0f0" stroke="#d0d0d0" stroke-width="0.8"/><rect x="0" y="1" width="1" height="10" fill="#bdbdbd"/><rect x="0.5" y="9.6" width="9" height="1" fill="#c4c4c4"/><circle cx="2.9" cy="3.4" r="0.85" fill="#111"/><rect x="4.2" y="3.1" width="3.4" height="0.6" fill="#9aa4d8"/><circle cx="2.9" cy="5.5" r="0.55" fill="#6a74b8"/><rect x="4.2" y="5.3" width="3.4" height="0.6" fill="#9aa4d8"/><circle cx="2.9" cy="7.6" r="0.85" fill="#111"/><rect x="4.2" y="7.4" width="3.4" height="0.6" fill="#9aa4d8"/></svg></div>
<div class="t" style="left:168.20px;top:335.00px;font-size:10px;color:#000;transform:scaleX(0.8630);transform-origin:0 0">Gruppenrichtlinien zur Erkennung von langsamen Verbindu…</div>
<div class="t" style="left:409.40px;top:335.00px;font-size:10px;color:#000;transform:scaleX(0.8817);transform-origin:0 0">Nicht konfigur…</div>
<div class="t" style="left:539.00px;top:335.00px;font-size:10px;color:#000;transform:scaleX(0.8790);transform-origin:0 0">Nein</div>
<div style="position:absolute;left:155px;top:347px;line-height:0"><svg width="10" height="11" viewBox="0 0 10 11"><path d="M0.5 0.5h6.5l2.5 2.5v7.5h-9z" fill="#fff" stroke="#c6c6c6" stroke-width="1"/><path d="M7 0.5v2.5h2.5" fill="#f0f0f0" stroke="#d0d0d0" stroke-width="0.8"/><rect x="0" y="1" width="1" height="10" fill="#bdbdbd"/><rect x="0.5" y="9.6" width="9" height="1" fill="#c4c4c4"/><circle cx="2.9" cy="3.4" r="0.85" fill="#111"/><rect x="4.2" y="3.1" width="3.4" height="0.6" fill="#9aa4d8"/><circle cx="2.9" cy="5.5" r="0.55" fill="#6a74b8"/><rect x="4.2" y="5.3" width="3.4" height="0.6" fill="#9aa4d8"/><circle cx="2.9" cy="7.6" r="0.85" fill="#111"/><rect x="4.2" y="7.4" width="3.4" height="0.6" fill="#9aa4d8"/></svg></div>
<div class="t" style="left:168.20px;top:349.00px;font-size:10px;color:#000;transform:scaleX(0.8682);transform-origin:0 0">Gruppenrichtlinien-Aktualisierungsintervall für Computer fe…</div>
<div class="t" style="left:409.40px;top:349.00px;font-size:10px;color:#000;transform:scaleX(0.8817);transform-origin:0 0">Nicht konfigur…</div>
<div class="t" style="left:539.00px;top:349.00px;font-size:10px;color:#000;transform:scaleX(0.8790);transform-origin:0 0">Nein</div>
<div style="position:absolute;left:155px;top:361px;line-height:0"><svg width="10" height="11" viewBox="0 0 10 11"><path d="M0.5 0.5h6.5l2.5 2.5v7.5h-9z" fill="#fff" stroke="#c6c6c6" stroke-width="1"/><path d="M7 0.5v2.5h2.5" fill="#f0f0f0" stroke="#d0d0d0" stroke-width="0.8"/><rect x="0" y="1" width="1" height="10" fill="#bdbdbd"/><rect x="0.5" y="9.6" width="9" height="1" fill="#c4c4c4"/><circle cx="2.9" cy="3.4" r="0.85" fill="#111"/><rect x="4.2" y="3.1" width="3.4" height="0.6" fill="#9aa4d8"/><circle cx="2.9" cy="5.5" r="0.55" fill="#6a74b8"/><rect x="4.2" y="5.3" width="3.4" height="0.6" fill="#9aa4d8"/><circle cx="2.9" cy="7.6" r="0.85" fill="#111"/><rect x="4.2" y="7.4" width="3.4" height="0.6" fill="#9aa4d8"/></svg></div>
<div class="t" style="left:168.20px;top:362.00px;font-size:10px;color:#000;transform:scaleX(0.8698);transform-origin:0 0">Gruppenrichtlinien-Aktualisierungsintervall für Domänenco…</div>
<div class="t" style="left:409.40px;top:362.00px;font-size:10px;color:#000;transform:scaleX(0.8817);transform-origin:0 0">Nicht konfigur…</div>
<div class="t" style="left:539.00px;top:362.00px;font-size:10px;color:#000;transform:scaleX(0.8790);transform-origin:0 0">Nein</div>
<div style="position:absolute;left:155px;top:374px;line-height:0"><svg width="10" height="11" viewBox="0 0 10 11"><path d="M0.5 0.5h6.5l2.5 2.5v7.5h-9z" fill="#fff" stroke="#c6c6c6" stroke-width="1"/><path d="M7 0.5v2.5h2.5" fill="#f0f0f0" stroke="#d0d0d0" stroke-width="0.8"/><rect x="0" y="1" width="1" height="10" fill="#bdbdbd"/><rect x="0.5" y="9.6" width="9" height="1" fill="#c4c4c4"/><circle cx="2.9" cy="3.4" r="0.85" fill="#111"/><rect x="4.2" y="3.1" width="3.4" height="0.6" fill="#9aa4d8"/><circle cx="2.9" cy="5.5" r="0.55" fill="#6a74b8"/><rect x="4.2" y="5.3" width="3.4" height="0.6" fill="#9aa4d8"/><circle cx="2.9" cy="7.6" r="0.85" fill="#111"/><rect x="4.2" y="7.4" width="3.4" height="0.6" fill="#9aa4d8"/></svg></div>
<div class="t" style="left:168.20px;top:376.00px;font-size:10px;color:#000;transform:scaleX(0.8660);transform-origin:0 0">Anmeldeskriptverzögerung konfigurieren</div>
<div class="t" style="left:409.40px;top:376.00px;font-size:10px;color:#000;transform:scaleX(0.8817);transform-origin:0 0">Nicht konfigur…</div>
<div class="t" style="left:539.00px;top:376.00px;font-size:10px;color:#000;transform:scaleX(0.8790);transform-origin:0 0">Nein</div>
<div style="position:absolute;left:155px;top:388px;line-height:0"><svg width="10" height="11" viewBox="0 0 10 11"><path d="M0.5 0.5h6.5l2.5 2.5v7.5h-9z" fill="#fff" stroke="#c6c6c6" stroke-width="1"/><path d="M7 0.5v2.5h2.5" fill="#f0f0f0" stroke="#d0d0d0" stroke-width="0.8"/><rect x="0" y="1" width="1" height="10" fill="#bdbdbd"/><rect x="0.5" y="9.6" width="9" height="1" fill="#c4c4c4"/><circle cx="2.9" cy="3.4" r="0.85" fill="#111"/><rect x="4.2" y="3.1" width="3.4" height="0.6" fill="#9aa4d8"/><circle cx="2.9" cy="5.5" r="0.55" fill="#6a74b8"/><rect x="4.2" y="5.3" width="3.4" height="0.6" fill="#9aa4d8"/><circle cx="2.9" cy="7.6" r="0.85" fill="#111"/><rect x="4.2" y="7.4" width="3.4" height="0.6" fill="#9aa4d8"/></svg></div>
<div class="t" style="left:168.20px;top:390.00px;font-size:10px;color:#000;transform:scaleX(0.8758);transform-origin:0 0">Immer lokale ADM-Dateien für den Gruppenrichtlinien-Edit…</div>
<div class="t" style="left:409.40px;top:390.00px;font-size:10px;color:#000;transform:scaleX(0.8817);transform-origin:0 0">Nicht konfigur…</div>
<div class="t" style="left:539.00px;top:390.00px;font-size:10px;color:#000;transform:scaleX(0.8790);transform-origin:0 0">Nein</div>
<div style="position:absolute;left:155px;top:402px;line-height:0"><svg width="10" height="11" viewBox="0 0 10 11"><path d="M0.5 0.5h6.5l2.5 2.5v7.5h-9z" fill="#fff" stroke="#c6c6c6" stroke-width="1"/><path d="M7 0.5v2.5h2.5" fill="#f0f0f0" stroke="#d0d0d0" stroke-width="0.8"/><rect x="0" y="1" width="1" height="10" fill="#bdbdbd"/><rect x="0.5" y="9.6" width="9" height="1" fill="#c4c4c4"/><circle cx="2.9" cy="3.4" r="0.85" fill="#111"/><rect x="4.2" y="3.1" width="3.4" height="0.6" fill="#9aa4d8"/><circle cx="2.9" cy="5.5" r="0.55" fill="#6a74b8"/><rect x="4.2" y="5.3" width="3.4" height="0.6" fill="#9aa4d8"/><circle cx="2.9" cy="7.6" r="0.85" fill="#111"/><rect x="4.2" y="7.4" width="3.4" height="0.6" fill="#9aa4d8"/></svg></div>
<div class="t" style="left:168.20px;top:404.00px;font-size:10px;color:#000;transform:scaleX(0.8660);transform-origin:0 0">Protokollierung des Richtlinienergebnissatzes deaktivieren</div>
<div class="t" style="left:409.40px;top:404.00px;font-size:10px;color:#000;transform:scaleX(0.8817);transform-origin:0 0">Nicht konfigur…</div>
<div class="t" style="left:539.00px;top:404.00px;font-size:10px;color:#000;transform:scaleX(0.8790);transform-origin:0 0">Nein</div>
<div style="position:absolute;left:155px;top:415px;line-height:0"><svg width="10" height="11" viewBox="0 0 10 11"><path d="M0.5 0.5h6.5l2.5 2.5v7.5h-9z" fill="#fff" stroke="#c6c6c6" stroke-width="1"/><path d="M7 0.5v2.5h2.5" fill="#f0f0f0" stroke="#d0d0d0" stroke-width="0.8"/><rect x="0" y="1" width="1" height="10" fill="#bdbdbd"/><rect x="0.5" y="9.6" width="9" height="1" fill="#c4c4c4"/><circle cx="2.9" cy="3.4" r="0.85" fill="#111"/><rect x="4.2" y="3.1" width="3.4" height="0.6" fill="#9aa4d8"/><circle cx="2.9" cy="5.5" r="0.55" fill="#6a74b8"/><rect x="4.2" y="5.3" width="3.4" height="0.6" fill="#9aa4d8"/><circle cx="2.9" cy="7.6" r="0.85" fill="#111"/><rect x="4.2" y="7.4" width="3.4" height="0.6" fill="#9aa4d8"/></svg></div>
<div class="t" style="left:168.20px;top:417.00px;font-size:10px;color:#000;transform:scaleX(0.8506);transform-origin:0 0">Synchronisierung der AD/DFS-Domänencontroller während …</div>
<div class="t" style="left:409.40px;top:417.00px;font-size:10px;color:#000;transform:scaleX(0.8817);transform-origin:0 0">Nicht konfigur…</div>
<div class="t" style="left:539.00px;top:417.00px;font-size:10px;color:#000;transform:scaleX(0.8790);transform-origin:0 0">Nein</div>
<div style="position:absolute;left:155px;top:429px;line-height:0"><svg width="10" height="11" viewBox="0 0 10 11"><path d="M0.5 0.5h6.5l2.5 2.5v7.5h-9z" fill="#fff" stroke="#c6c6c6" stroke-width="1"/><path d="M7 0.5v2.5h2.5" fill="#f0f0f0" stroke="#d0d0d0" stroke-width="0.8"/><rect x="0" y="1" width="1" height="10" fill="#bdbdbd"/><rect x="0.5" y="9.6" width="9" height="1" fill="#c4c4c4"/><circle cx="2.9" cy="3.4" r="0.85" fill="#111"/><rect x="4.2" y="3.1" width="3.4" height="0.6" fill="#9aa4d8"/><circle cx="2.9" cy="5.5" r="0.55" fill="#6a74b8"/><rect x="4.2" y="5.3" width="3.4" height="0.6" fill="#9aa4d8"/><circle cx="2.9" cy="7.6" r="0.85" fill="#111"/><rect x="4.2" y="7.4" width="3.4" height="0.6" fill="#9aa4d8"/></svg></div>
<div class="t" style="left:168.20px;top:431.00px;font-size:10px;color:#000;transform:scaleX(0.8541);transform-origin:0 0">DirectAccess-Verbindung als schnelle Netzwerkverbindung …</div>
<div class="t" style="left:409.40px;top:431.00px;font-size:10px;color:#000;transform:scaleX(0.8817);transform-origin:0 0">Nicht konfigur…</div>
<div class="t" style="left:539.00px;top:431.00px;font-size:10px;color:#000;transform:scaleX(0.8790);transform-origin:0 0">Nein</div>
<div style="position:absolute;left:155px;top:443px;line-height:0"><svg width="10" height="11" viewBox="0 0 10 11"><path d="M0.5 0.5h6.5l2.5 2.5v7.5h-9z" fill="#fff" stroke="#c6c6c6" stroke-width="1"/><path d="M7 0.5v2.5h2.5" fill="#f0f0f0" stroke="#d0d0d0" stroke-width="0.8"/><rect x="0" y="1" width="1" height="10" fill="#bdbdbd"/><rect x="0.5" y="9.6" width="9" height="1" fill="#c4c4c4"/><circle cx="2.9" cy="3.4" r="0.85" fill="#111"/><rect x="4.2" y="3.1" width="3.4" height="0.6" fill="#9aa4d8"/><circle cx="2.9" cy="5.5" r="0.55" fill="#6a74b8"/><rect x="4.2" y="5.3" width="3.4" height="0.6" fill="#9aa4d8"/><circle cx="2.9" cy="7.6" r="0.85" fill="#111"/><rect x="4.2" y="7.4" width="3.4" height="0.6" fill="#9aa4d8"/></svg></div>
<div class="t" style="left:168.20px;top:445.00px;font-size:10px;color:#000;transform:scaleX(0.8542);transform-origin:0 0">Asynchrone Verarbeitung der Gruppenrichtlinie bei langsam…</div>
<div class="t" style="left:409.40px;top:445.00px;font-size:10px;color:#000;transform:scaleX(0.8817);transform-origin:0 0">Nicht konfigur…</div>
<div class="t" style="left:539.00px;top:445.00px;font-size:10px;color:#000;transform:scaleX(0.8790);transform-origin:0 0">Nein</div>
<div style="position:absolute;left:155px;top:457px;line-height:0"><svg width="10" height="11" viewBox="0 0 10 11"><path d="M0.5 0.5h6.5l2.5 2.5v7.5h-9z" fill="#fff" stroke="#c6c6c6" stroke-width="1"/><path d="M7 0.5v2.5h2.5" fill="#f0f0f0" stroke="#d0d0d0" stroke-width="0.8"/><rect x="0" y="1" width="1" height="10" fill="#bdbdbd"/><rect x="0.5" y="9.6" width="9" height="1" fill="#c4c4c4"/><circle cx="2.9" cy="3.4" r="0.85" fill="#111"/><rect x="4.2" y="3.1" width="3.4" height="0.6" fill="#9aa4d8"/><circle cx="2.9" cy="5.5" r="0.55" fill="#6a74b8"/><rect x="4.2" y="5.3" width="3.4" height="0.6" fill="#9aa4d8"/><circle cx="2.9" cy="7.6" r="0.85" fill="#111"/><rect x="4.2" y="7.4" width="3.4" height="0.6" fill="#9aa4d8"/></svg></div>
<div class="t" style="left:168.20px;top:458.00px;font-size:10px;color:#000;transform:scaleX(0.8503);transform-origin:0 0">Wartezeit für Richtlinienverarbeitung beim Systemstart ange…</div>
<div class="t" style="left:421.82px;top:458.00px;font-size:10px;color:#000;transform:scaleX(0.8790);transform-origin:50% 0">Aktiviert</div>
<div class="t" style="left:539.00px;top:458.00px;font-size:10px;color:#000;transform:scaleX(0.8790);transform-origin:0 0">Nein</div>
<div style="position:absolute;left:155px;top:470px;line-height:0"><svg width="10" height="11" viewBox="0 0 10 11"><path d="M0.5 0.5h6.5l2.5 2.5v7.5h-9z" fill="#fff" stroke="#c6c6c6" stroke-width="1"/><path d="M7 0.5v2.5h2.5" fill="#f0f0f0" stroke="#d0d0d0" stroke-width="0.8"/><rect x="0" y="1" width="1" height="10" fill="#bdbdbd"/><rect x="0.5" y="9.6" width="9" height="1" fill="#c4c4c4"/><circle cx="2.9" cy="3.4" r="0.85" fill="#111"/><rect x="4.2" y="3.1" width="3.4" height="0.6" fill="#9aa4d8"/><circle cx="2.9" cy="5.5" r="0.55" fill="#6a74b8"/><rect x="4.2" y="5.3" width="3.4" height="0.6" fill="#9aa4d8"/><circle cx="2.9" cy="7.6" r="0.85" fill="#111"/><rect x="4.2" y="7.4" width="3.4" height="0.6" fill="#9aa4d8"/></svg></div>
<div class="t" style="left:168.20px;top:472.00px;font-size:10px;color:#000;transform:scaleX(0.8662);transform-origin:0 0">Loopbackverarbeitungsmodus für Benutzergruppenrichtlini…</div>
<div class="t" style="left:409.40px;top:472.00px;font-size:10px;color:#000;transform:scaleX(0.8817);transform-origin:0 0">Nicht konfigur…</div>
<div class="t" style="left:539.00px;top:472.00px;font-size:10px;color:#000;transform:scaleX(0.8790);transform-origin:0 0">Nein</div>
<div style="position:absolute;left:155px;top:484px;line-height:0"><svg width="10" height="11" viewBox="0 0 10 11"><path d="M0.5 0.5h6.5l2.5 2.5v7.5h-9z" fill="#fff" stroke="#c6c6c6" stroke-width="1"/><path d="M7 0.5v2.5h2.5" fill="#f0f0f0" stroke="#d0d0d0" stroke-width="0.8"/><rect x="0" y="1" width="1" height="10" fill="#bdbdbd"/><rect x="0.5" y="9.6" width="9" height="1" fill="#c4c4c4"/><circle cx="2.9" cy="3.4" r="0.85" fill="#111"/><rect x="4.2" y="3.1" width="3.4" height="0.6" fill="#9aa4d8"/><circle cx="2.9" cy="5.5" r="0.55" fill="#6a74b8"/><rect x="4.2" y="5.3" width="3.4" height="0.6" fill="#9aa4d8"/><circle cx="2.9" cy="7.6" r="0.85" fill="#111"/><rect x="4.2" y="7.4" width="3.4" height="0.6" fill="#9aa4d8"/></svg></div>
<div class="t" style="left:168.20px;top:486.00px;font-size:10px;color:#000;transform:scaleX(0.8541);transform-origin:0 0">Asynchrone Verarbeitung der Benutzergruppenrichtlinie bei …</div>
<div class="t" style="left:415.98px;top:486.00px;font-size:10px;color:#000;transform:scaleX(0.8790);transform-origin:50% 0">Deaktiviert</div>
<div class="t" style="left:539.00px;top:486.00px;font-size:10px;color:#000;transform:scaleX(0.8790);transform-origin:0 0">Nein</div>
<div style="position:absolute;left:155px;top:498px;line-height:0"><svg width="10" height="11" viewBox="0 0 10 11"><path d="M0.5 0.5h6.5l2.5 2.5v7.5h-9z" fill="#fff" stroke="#c6c6c6" stroke-width="1"/><path d="M7 0.5v2.5h2.5" fill="#f0f0f0" stroke="#d0d0d0" stroke-width="0.8"/><rect x="0" y="1" width="1" height="10" fill="#bdbdbd"/><rect x="0.5" y="9.6" width="9" height="1" fill="#c4c4c4"/><circle cx="2.9" cy="3.4" r="0.85" fill="#111"/><rect x="4.2" y="3.1" width="3.4" height="0.6" fill="#9aa4d8"/><circle cx="2.9" cy="5.5" r="0.55" fill="#6a74b8"/><rect x="4.2" y="5.3" width="3.4" height="0.6" fill="#9aa4d8"/><circle cx="2.9" cy="7.6" r="0.85" fill="#111"/><rect x="4.2" y="7.4" width="3.4" height="0.6" fill="#9aa4d8"/></svg></div>
<div class="t" style="left:168.20px;top:500.00px;font-size:10px;color:#000;transform:scaleX(0.8559);transform-origin:0 0">Configure Applications preference extension policy processi…</div>
<div class="t" style="left:409.40px;top:500.00px;font-size:10px;color:#000;transform:scaleX(0.8817);transform-origin:0 0">Nicht konfigur…</div>
<div class="t" style="left:539.00px;top:500.00px;font-size:10px;color:#000;transform:scaleX(0.8790);transform-origin:0 0">Nein</div>
<div style="position:absolute;left:155px;top:511px;line-height:0"><svg width="10" height="11" viewBox="0 0 10 11"><path d="M0.5 0.5h6.5l2.5 2.5v7.5h-9z" fill="#fff" stroke="#c6c6c6" stroke-width="1"/><path d="M7 0.5v2.5h2.5" fill="#f0f0f0" stroke="#d0d0d0" stroke-width="0.8"/><rect x="0" y="1" width="1" height="10" fill="#bdbdbd"/><rect x="0.5" y="9.6" width="9" height="1" fill="#c4c4c4"/><circle cx="2.9" cy="3.4" r="0.85" fill="#111"/><rect x="4.2" y="3.1" width="3.4" height="0.6" fill="#9aa4d8"/><circle cx="2.9" cy="5.5" r="0.55" fill="#6a74b8"/><rect x="4.2" y="5.3" width="3.4" height="0.6" fill="#9aa4d8"/><circle cx="2.9" cy="7.6" r="0.85" fill="#111"/><rect x="4.2" y="7.4" width="3.4" height="0.6" fill="#9aa4d8"/></svg></div>
<div class="t" style="left:168.20px;top:513.00px;font-size:10px;color:#000;transform:scaleX(0.8356);transform-origin:0 0">Configure Data Sources preference extension policy processi…</div>
<div class="t" style="left:409.40px;top:513.00px;font-size:10px;color:#000;transform:scaleX(0.8817);transform-origin:0 0">Nicht konfigur…</div>
<div class="t" style="left:539.00px;top:513.00px;font-size:10px;color:#000;transform:scaleX(0.8790);transform-origin:0 0">Nein</div>
<div style="position:absolute;left:155px;top:525px;line-height:0"><svg width="10" height="11" viewBox="0 0 10 11"><path d="M0.5 0.5h6.5l2.5 2.5v7.5h-9z" fill="#fff" stroke="#c6c6c6" stroke-width="1"/><path d="M7 0.5v2.5h2.5" fill="#f0f0f0" stroke="#d0d0d0" stroke-width="0.8"/><rect x="0" y="1" width="1" height="10" fill="#bdbdbd"/><rect x="0.5" y="9.6" width="9" height="1" fill="#c4c4c4"/><circle cx="2.9" cy="3.4" r="0.85" fill="#111"/><rect x="4.2" y="3.1" width="3.4" height="0.6" fill="#9aa4d8"/><circle cx="2.9" cy="5.5" r="0.55" fill="#6a74b8"/><rect x="4.2" y="5.3" width="3.4" height="0.6" fill="#9aa4d8"/><circle cx="2.9" cy="7.6" r="0.85" fill="#111"/><rect x="4.2" y="7.4" width="3.4" height="0.6" fill="#9aa4d8"/></svg></div>
<div class="t" style="left:168.20px;top:527.00px;font-size:10px;color:#000;transform:scaleX(0.8660);transform-origin:0 0">Configure Devices preference extension policy processing</div>
<div class="t" style="left:409.40px;top:527.00px;font-size:10px;color:#000;transform:scaleX(0.8817);transform-origin:0 0">Nicht konfigur…</div>
<div class="t" style="left:539.00px;top:527.00px;font-size:10px;color:#000;transform:scaleX(0.8790);transform-origin:0 0">Nein</div>
<div style="position:absolute;left:155px;top:539px;line-height:0"><svg width="10" height="11" viewBox="0 0 10 11"><path d="M0.5 0.5h6.5l2.5 2.5v7.5h-9z" fill="#fff" stroke="#c6c6c6" stroke-width="1"/><path d="M7 0.5v2.5h2.5" fill="#f0f0f0" stroke="#d0d0d0" stroke-width="0.8"/><rect x="0" y="1" width="1" height="10" fill="#bdbdbd"/><rect x="0.5" y="9.6" width="9" height="1" fill="#c4c4c4"/><circle cx="2.9" cy="3.4" r="0.85" fill="#111"/><rect x="4.2" y="3.1" width="3.4" height="0.6" fill="#9aa4d8"/><circle cx="2.9" cy="5.5" r="0.55" fill="#6a74b8"/><rect x="4.2" y="5.3" width="3.4" height="0.6" fill="#9aa4d8"/><circle cx="2.9" cy="7.6" r="0.85" fill="#111"/><rect x="4.2" y="7.4" width="3.4" height="0.6" fill="#9aa4d8"/></svg></div>
<div class="t" style="left:168.20px;top:541.00px;font-size:10px;color:#000;transform:scaleX(0.8632);transform-origin:0 0">Configure Drive Maps preference extension policy processing</div>
<div class="t" style="left:409.40px;top:541.00px;font-size:10px;color:#000;transform:scaleX(0.8817);transform-origin:0 0">Nicht konfigur…</div>
<div class="t" style="left:539.00px;top:541.00px;font-size:10px;color:#000;transform:scaleX(0.8790);transform-origin:0 0">Nein</div>
<div style="position:absolute;left:155px;top:553px;line-height:0"><svg width="10" height="11" viewBox="0 0 10 11"><path d="M0.5 0.5h6.5l2.5 2.5v7.5h-9z" fill="#fff" stroke="#c6c6c6" stroke-width="1"/><path d="M7 0.5v2.5h2.5" fill="#f0f0f0" stroke="#d0d0d0" stroke-width="0.8"/><rect x="0" y="1" width="1" height="10" fill="#bdbdbd"/><rect x="0.5" y="9.6" width="9" height="1" fill="#c4c4c4"/><circle cx="2.9" cy="3.4" r="0.85" fill="#111"/><rect x="4.2" y="3.1" width="3.4" height="0.6" fill="#9aa4d8"/><circle cx="2.9" cy="5.5" r="0.55" fill="#6a74b8"/><rect x="4.2" y="5.3" width="3.4" height="0.6" fill="#9aa4d8"/><circle cx="2.9" cy="7.6" r="0.85" fill="#111"/><rect x="4.2" y="7.4" width="3.4" height="0.6" fill="#9aa4d8"/></svg></div>
<div class="t" style="left:168.20px;top:554.00px;font-size:10px;color:#000;transform:scaleX(0.8473);transform-origin:0 0">Configure Environment preference extension policy processi…</div>
<div class="t" style="left:409.40px;top:554.00px;font-size:10px;color:#000;transform:scaleX(0.8817);transform-origin:0 0">Nicht konfigur…</div>
<div class="t" style="left:539.00px;top:554.00px;font-size:10px;color:#000;transform:scaleX(0.8790);transform-origin:0 0">Nein</div>
<div style="position:absolute;left:155px;top:566px;line-height:0"><svg width="10" height="11" viewBox="0 0 10 11"><path d="M0.5 0.5h6.5l2.5 2.5v7.5h-9z" fill="#fff" stroke="#c6c6c6" stroke-width="1"/><path d="M7 0.5v2.5h2.5" fill="#f0f0f0" stroke="#d0d0d0" stroke-width="0.8"/><rect x="0" y="1" width="1" height="10" fill="#bdbdbd"/><rect x="0.5" y="9.6" width="9" height="1" fill="#c4c4c4"/><circle cx="2.9" cy="3.4" r="0.85" fill="#111"/><rect x="4.2" y="3.1" width="3.4" height="0.6" fill="#9aa4d8"/><circle cx="2.9" cy="5.5" r="0.55" fill="#6a74b8"/><rect x="4.2" y="5.3" width="3.4" height="0.6" fill="#9aa4d8"/><circle cx="2.9" cy="7.6" r="0.85" fill="#111"/><rect x="4.2" y="7.4" width="3.4" height="0.6" fill="#9aa4d8"/></svg></div>
<div class="t" style="left:168.20px;top:568.00px;font-size:10px;color:#000;transform:scaleX(0.8660);transform-origin:0 0">Configure Files preference extension policy processing</div>
<div class="t" style="left:409.40px;top:568.00px;font-size:10px;color:#000;transform:scaleX(0.8817);transform-origin:0 0">Nicht konfigur…</div>
<div class="t" style="left:539.00px;top:568.00px;font-size:10px;color:#000;transform:scaleX(0.8790);transform-origin:0 0">Nein</div>
<div style="position:absolute;left:155px;top:580px;line-height:0"><svg width="10" height="11" viewBox="0 0 10 11"><path d="M0.5 0.5h6.5l2.5 2.5v7.5h-9z" fill="#fff" stroke="#c6c6c6" stroke-width="1"/><path d="M7 0.5v2.5h2.5" fill="#f0f0f0" stroke="#d0d0d0" stroke-width="0.8"/><rect x="0" y="1" width="1" height="10" fill="#bdbdbd"/><rect x="0.5" y="9.6" width="9" height="1" fill="#c4c4c4"/><circle cx="2.9" cy="3.4" r="0.85" fill="#111"/><rect x="4.2" y="3.1" width="3.4" height="0.6" fill="#9aa4d8"/><circle cx="2.9" cy="5.5" r="0.55" fill="#6a74b8"/><rect x="4.2" y="5.3" width="3.4" height="0.6" fill="#9aa4d8"/><circle cx="2.9" cy="7.6" r="0.85" fill="#111"/><rect x="4.2" y="7.4" width="3.4" height="0.6" fill="#9aa4d8"/></svg></div>
<div class="t" style="left:168.20px;top:582.00px;font-size:10px;color:#000;transform:scaleX(0.8579);transform-origin:0 0">Configure Folder Options preference extension policy proce…</div>
<div class="t" style="left:409.40px;top:582.00px;font-size:10px;color:#000;transform:scaleX(0.8817);transform-origin:0 0">Nicht konfigur…</div>
<div class="t" style="left:539.00px;top:582.00px;font-size:10px;color:#000;transform:scaleX(0.8790);transform-origin:0 0">Nein</div>
<div style="position:absolute;left:155px;top:594px;line-height:0"><svg width="10" height="11" viewBox="0 0 10 11"><path d="M0.5 0.5h6.5l2.5 2.5v7.5h-9z" fill="#fff" stroke="#c6c6c6" stroke-width="1"/><path d="M7 0.5v2.5h2.5" fill="#f0f0f0" stroke="#d0d0d0" stroke-width="0.8"/><rect x="0" y="1" width="1" height="10" fill="#bdbdbd"/><rect x="0.5" y="9.6" width="9" height="1" fill="#c4c4c4"/><circle cx="2.9" cy="3.4" r="0.85" fill="#111"/><rect x="4.2" y="3.1" width="3.4" height="0.6" fill="#9aa4d8"/><circle cx="2.9" cy="5.5" r="0.55" fill="#6a74b8"/><rect x="4.2" y="5.3" width="3.4" height="0.6" fill="#9aa4d8"/><circle cx="2.9" cy="7.6" r="0.85" fill="#111"/><rect x="4.2" y="7.4" width="3.4" height="0.6" fill="#9aa4d8"/></svg></div>
<div class="t" style="left:168.20px;top:596.00px;font-size:10px;color:#000;transform:scaleX(0.8660);transform-origin:0 0">Configure Folders preference extension policy processing</div>
<div class="t" style="left:409.40px;top:596.00px;font-size:10px;color:#000;transform:scaleX(0.8817);transform-origin:0 0">Nicht konfigur…</div>
<div class="t" style="left:539.00px;top:596.00px;font-size:10px;color:#000;transform:scaleX(0.8790);transform-origin:0 0">Nein</div>
<div style="position:absolute;left:155px;top:607px;line-height:0"><svg width="10" height="11" viewBox="0 0 10 11"><path d="M0.5 0.5h6.5l2.5 2.5v7.5h-9z" fill="#fff" stroke="#c6c6c6" stroke-width="1"/><path d="M7 0.5v2.5h2.5" fill="#f0f0f0" stroke="#d0d0d0" stroke-width="0.8"/><rect x="0" y="1" width="1" height="10" fill="#bdbdbd"/><rect x="0.5" y="9.6" width="9" height="1" fill="#c4c4c4"/><circle cx="2.9" cy="3.4" r="0.85" fill="#111"/><rect x="4.2" y="3.1" width="3.4" height="0.6" fill="#9aa4d8"/><circle cx="2.9" cy="5.5" r="0.55" fill="#6a74b8"/><rect x="4.2" y="5.3" width="3.4" height="0.6" fill="#9aa4d8"/><circle cx="2.9" cy="7.6" r="0.85" fill="#111"/><rect x="4.2" y="7.4" width="3.4" height="0.6" fill="#9aa4d8"/></svg></div>
<div class="t" style="left:168.20px;top:609.00px;font-size:10px;color:#000;transform:scaleX(0.8660);transform-origin:0 0">Configure Ini Files preference extension policy processing</div>
<div class="t" style="left:409.40px;top:609.00px;font-size:10px;color:#000;transform:scaleX(0.8817);transform-origin:0 0">Nicht konfigur…</div>
<div class="t" style="left:539.00px;top:609.00px;font-size:10px;color:#000;transform:scaleX(0.8790);transform-origin:0 0">Nein</div>
<div style="position:absolute;left:155px;top:621px;line-height:0"><svg width="10" height="11" viewBox="0 0 10 11"><path d="M0.5 0.5h6.5l2.5 2.5v7.5h-9z" fill="#fff" stroke="#c6c6c6" stroke-width="1"/><path d="M7 0.5v2.5h2.5" fill="#f0f0f0" stroke="#d0d0d0" stroke-width="0.8"/><rect x="0" y="1" width="1" height="10" fill="#bdbdbd"/><rect x="0.5" y="9.6" width="9" height="1" fill="#c4c4c4"/><circle cx="2.9" cy="3.4" r="0.85" fill="#111"/><rect x="4.2" y="3.1" width="3.4" height="0.6" fill="#9aa4d8"/><circle cx="2.9" cy="5.5" r="0.55" fill="#6a74b8"/><rect x="4.2" y="5.3" width="3.4" height="0.6" fill="#9aa4d8"/><circle cx="2.9" cy="7.6" r="0.85" fill="#111"/><rect x="4.2" y="7.4" width="3.4" height="0.6" fill="#9aa4d8"/></svg></div>
<div class="t" style="left:168.20px;top:623.00px;font-size:10px;color:#000;transform:scaleX(0.8526);transform-origin:0 0">Configure Internet Settings preference extension policy proc…</div>
<div class="t" style="left:409.40px;top:623.00px;font-size:10px;color:#000;transform:scaleX(0.8817);transform-origin:0 0">Nicht konfigur…</div>
<div class="t" style="left:539.00px;top:623.00px;font-size:10px;color:#000;transform:scaleX(0.8790);transform-origin:0 0">Nein</div>
</div>
<div style="position:absolute;left:281px;top:719px;width:629px;height:1px;background:#a0a0a0;"></div>
<svg style="position:absolute;left:276px;top:719px" width="110" height="16" viewBox="0 0 110 16"><path d="M54.5 0.5L50 14h43.5l5.5-13.5" fill="#f0f0f0" stroke="#8c8c8c" stroke-width="1"/><path d="M3 0L9 14h40.5L55 0z" fill="#fff" stroke="none"/><path d="M3 0L9 14h40.5L55 0" fill="none" stroke="#8c8c8c" stroke-width="1"/></svg>
<div class="t" style="left:288.50px;top:723.00px;font-size:10px;color:#000;transform:scaleX(0.8339);transform-origin:0 0">Erweitert</div>
<div class="t" style="left:334.00px;top:723.00px;font-size:10px;color:#000;transform:scaleX(0.8277);transform-origin:0 0">Standard</div>
<div style="position:absolute;left:277px;top:733px;width:633px;height:1px;background:#e3e3e3;"></div>
<div class="t" style="left:2.00px;top:739.00px;font-size:10px;color:#000;transform:scaleX(0.8448);transform-origin:0 0">56 Einstellung(en)</div>
</body></html>
